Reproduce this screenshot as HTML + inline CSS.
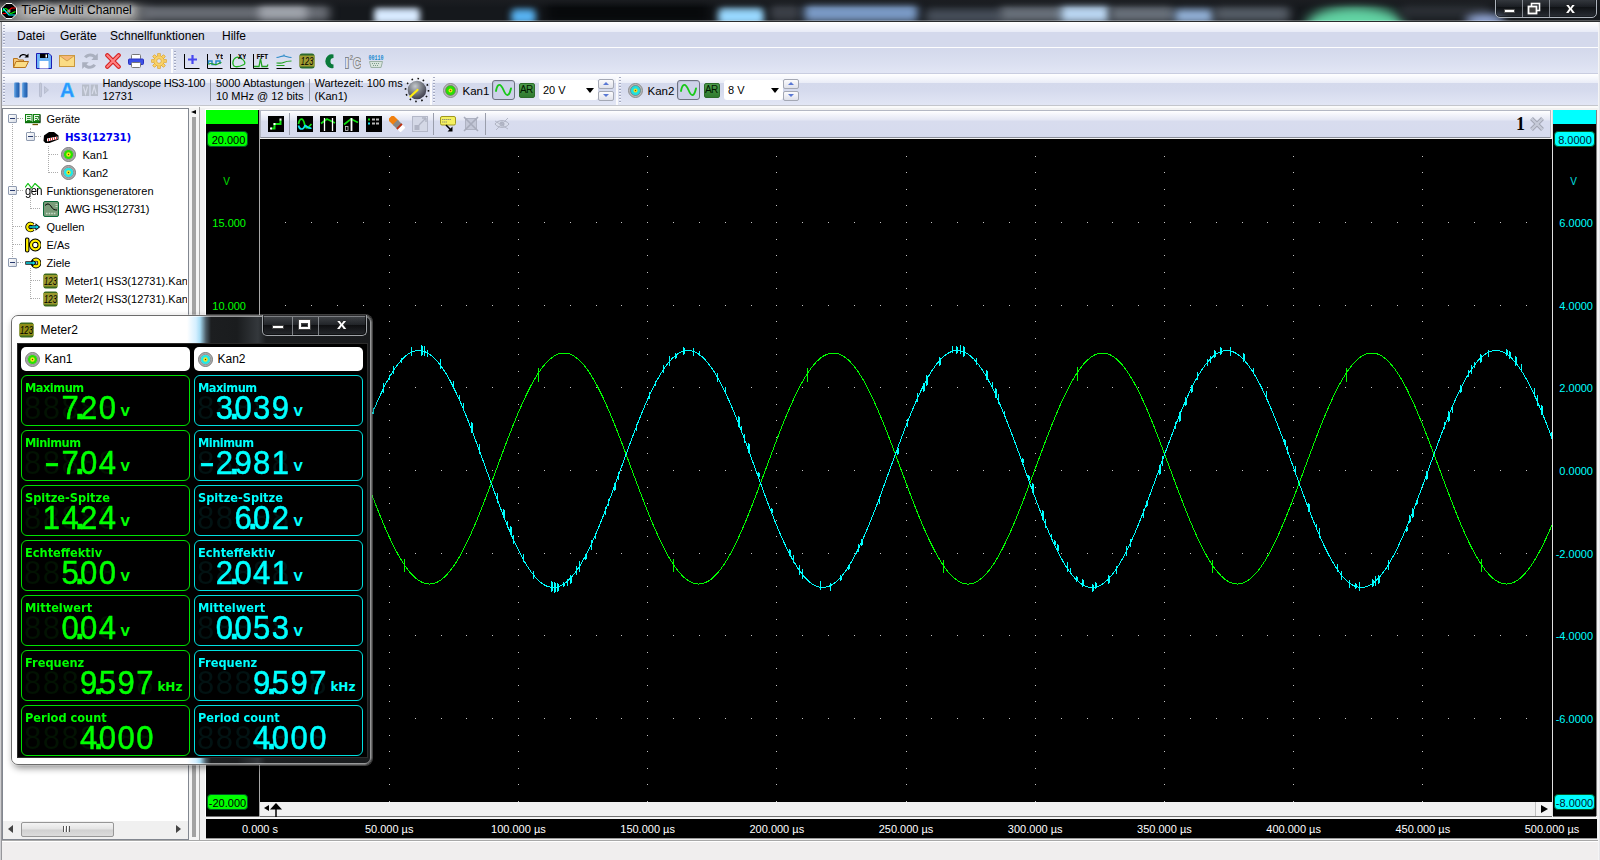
<!DOCTYPE html>
<html lang="de">
<head>
<meta charset="utf-8">
<title>TiePie Multi Channel</title>
<style>
*{box-sizing:border-box;margin:0;padding:0}
html,body{width:1600px;height:860px;overflow:hidden;background:#d6dbee;font-family:"Liberation Sans","DejaVu Sans",sans-serif;font-size:11px;color:#000}
.abs,.abs>*{position:absolute}
#root{position:relative;width:1600px;height:860px;overflow:hidden}
#root>div,#root>svg{position:absolute}
.t{position:absolute;white-space:nowrap;line-height:14px}
/* title bar */
#title{left:0;top:0;width:1600px;height:22px;background:#15181c;overflow:hidden}
#title .blob{position:absolute;border-radius:50%;filter:blur(7px)}
#titletxt{left:21.500px;top:3px;font-size:12px;line-height:15px;color:#000;text-shadow:0 0 7px rgba(255,255,255,.75),0 0 11px rgba(255,255,255,.55),0 0 14px rgba(255,255,255,.4)}
/* bars */
.bar{left:2px;width:1596px;background:linear-gradient(#fff 0,#f4f5fb 3px,#e6e9f5 9px,#d6dbee 9.5px,#d5daed 100%)}
.grip{position:absolute;width:2px;background:repeating-linear-gradient(#9096b0 0 1px,#fafbfe 1px 2px,transparent 2px 3px);opacity:.75}
.vsep{position:absolute;width:1px;background:#8b8f9e}
.ic{position:absolute;width:16px;height:16px}
.dots{border-top:1px dotted #acacac}
.vdots{border-left:1px dotted #acacac}
.box{position:absolute;width:9px;height:9px;border:1px solid #8f9bb0;background:linear-gradient(135deg,#fff,#d8dde6);border-radius:1px}
.box:after{content:"";position:absolute;left:1px;top:3px;width:5px;height:1px;background:#2a3c6e}
.lab{position:absolute;white-space:nowrap;font-size:11px;line-height:13px}
.cell{position:absolute;width:169px;height:51px;border:1px solid;border-radius:6px;background:#000}
.cell b{position:absolute;left:3px;top:5px;font-family:"DejaVu Sans","Liberation Sans",sans-serif;font-size:11.400px;line-height:14px;font-weight:bold;letter-spacing:0;transform:scaleY(1.04);transform-origin:0 100%}
.seg{position:absolute;left:3.500px;top:15.500px;height:30px;font-family:"Liberation Sans","DejaVu Sans",sans-serif;font-size:31px;line-height:30px;white-space:nowrap;transform-origin:0 0;transform:scaleY(1.09);-webkit-text-stroke:.5px currentColor}
.seg u{display:inline-block;width:18.700px;text-align:left;text-decoration:none;text-indent:-1.500px}
.seg u.m{transform:translateX(2.500px) scaleX(1.500);transform-origin:0 50%}
.seg i{font-style:normal;font-weight:bold;display:inline-block;width:0;position:relative;left:-6px}
.gh5::before{content:"88888"}.gh7::before{content:"8888888"}
.ghost{letter-spacing:1.460px;text-indent:-1.500px}
.g .ghost{color:#021202;-webkit-text-stroke:0}.c .ghost{color:#021212;-webkit-text-stroke:0}
.unit{position:absolute;font-family:"DejaVu Sans","Liberation Sans",sans-serif;font-weight:bold;font-size:12px;line-height:14px}
.g{color:#0f0;border-color:#00e000}
.c{color:#0ff;border-color:#00e0e0}
</style>
</head>
<body>
<div id="root">
<!-- ===== title bar ===== -->
<div id="title">
  <div class="blob" style="left:-30px;top:-8px;width:90px;height:40px;background:#707070;filter:blur(8px)"></div>
  <div class="blob" style="left:14px;top:0px;width:130px;height:24px;background:#a8a8a8;border-radius:10px;filter:blur(7px)"></div>
  <div class="blob" style="left:140px;top:5px;width:190px;height:16px;background:#6c7078;border-radius:6px;filter:blur(5px)"></div>
  <div class="blob" style="left:258px;top:6px;width:50px;height:13px;background:#a4a8b0;border-radius:6px;filter:blur(4px)"></div>
  <div class="blob" style="left:374px;top:8px;width:46px;height:16px;background:#d8eaff;border-radius:4px;filter:blur(3px)"></div>
  <div class="blob" style="left:511px;top:9px;width:25px;height:15px;background:#58b4f4;border-radius:5px;filter:blur(3.500px)"></div>
  <div class="blob" style="left:545px;top:0px;width:165px;height:24px;background:#07090b;border-radius:5px;filter:blur(6px)"></div>
  <div class="blob" style="left:718px;top:8px;width:46px;height:17px;background:#98d8ff;border-radius:5px;filter:blur(3.500px)"></div>
  <div class="blob" style="left:770px;top:4px;width:30px;height:17px;background:#3c4048;border-radius:5px;filter:blur(4px)"></div>
  <div class="blob" style="left:804px;top:4px;width:114px;height:18px;background:#7c9cc8;border-radius:5px;filter:blur(4px)"></div>
  <div class="blob" style="left:925px;top:9px;width:80px;height:14px;background:#4a525e;border-radius:5px;filter:blur(5px)"></div>
  <div class="blob" style="left:1000px;top:6px;width:62px;height:16px;background:#6a727c;border-radius:5px;filter:blur(4px)"></div>
  <div class="blob" style="left:1060px;top:5px;width:50px;height:18px;background:#bcd8f4;border-radius:5px;filter:blur(4px)"></div>
  <div class="blob" style="left:1110px;top:6px;width:64px;height:16px;background:#6a727c;border-radius:5px;filter:blur(4px)"></div>
  <div class="blob" style="left:1174px;top:9px;width:40px;height:14px;background:#98b8e0;border-radius:5px;filter:blur(4px)"></div>
  <div class="blob" style="left:1214px;top:7px;width:76px;height:14px;background:#5a626c;border-radius:5px;filter:blur(5px)"></div>
  <div class="blob" style="left:1306px;top:6px;width:98px;height:40px;background:#62d4a4;filter:blur(6px)"></div>
  <div class="blob" style="left:1400px;top:4px;width:90px;height:14px;background:#2c3036;border-radius:5px;filter:blur(5px)"></div>
  <div class="blob" style="left:1465px;top:15px;width:40px;height:10px;background:#a8c0f8;filter:blur(4px)"></div>
  <div style="position:absolute;left:0;top:0;width:1600px;height:8px;background:linear-gradient(rgba(28,30,34,.85),rgba(28,30,34,0))"></div>
</div>
<!-- app icon -->
<svg style="left:1px;top:3px" width="16" height="16" viewBox="0 0 16 16"><polygon points="5,0.5 11,0.5 15.5,5 15.5,11 11,15.5 5,15.5 0.5,11 0.5,5" fill="#000" stroke="#fff" stroke-width="1"/><path d="M1.5 10.5h3l6-5.500h4" stroke="#f00" fill="none" stroke-width="1.200"/><path d="M1.500 8.500c2-4 4-4 6 0s4 1 7 0" stroke="#0f0" fill="none" stroke-width="1.200"/><path d="M2 5.500l6 6.500h6" stroke="#0ff" fill="none" stroke-width="1.200"/><circle cx="8" cy="8" r="1.600" fill="#999"/></svg>
<div id="titletxt" class="t">TiePie Multi Channel</div>
<!-- window buttons -->
<div style="left:1495px;top:-4px;width:102px;height:22px;border:1px solid #aeb4bc;border-radius:0 0 5px 5px;box-shadow:inset 0 0 0 1px rgba(20,24,28,.7);background:linear-gradient(rgba(90,96,104,.55),rgba(30,34,40,.5) 50%,rgba(10,12,14,.5) 51%,rgba(60,66,76,.5))"></div>
<div style="left:1522px;top:0;width:1px;height:17px;background:#aeb4bc;opacity:.7"></div>
<div style="left:1549px;top:0;width:1px;height:17px;background:#aeb4bc;opacity:.7"></div>
<div style="left:1504px;top:9px;width:11px;height:4px;background:#fff;border:1px solid #555;border-radius:1px"></div>
<svg style="left:1527px;top:2px" width="14" height="14" viewBox="0 0 14 14"><rect x="4.500" y="1.500" width="8" height="7" fill="none" stroke="#fff" stroke-width="1.600"/><rect x="1.500" y="4.500" width="8" height="7" fill="#444" stroke="#fff" stroke-width="1.800"/></svg>
<div class="t" style="left:1566px;top:0px;font-size:14px;font-weight:bold;color:#fff;line-height:16px;text-shadow:0 0 2px #333,0 0 1px #000;transform:scaleX(1.15);transform-origin:0 0">x</div>
<div style="left:0;top:20px;width:1600px;height:1px;background:rgba(255,255,255,.28)"></div>
<div style="left:0;top:21px;width:1600px;height:1px;background:#2a2c2e"></div>
<!-- window side borders -->
<div style="left:0;top:22px;width:2px;height:838px;background:linear-gradient(90deg,#cfcfd2 0,#cfcfd2 50%,#8e8e92 50%,#a0a0a4 100%)"></div>
<div style="left:1598px;top:22px;width:2px;height:838px;background:linear-gradient(90deg,#fdfdfd,#dcdce0)"></div>
<!-- ===== band A: menu bar + toolbar 1 ===== -->
<div style="left:2px;top:22px;width:1596px;height:51px;background:linear-gradient(#fff 0,#f6f7fc 4px,#e9ecf7 9.500px,#d4d9ec 10px,#d4d9ec 28px,#dadff0 40px,#e2e6f5 51px)"></div>
<div class="grip" style="left:3px;top:25px;height:20px"></div>
<div class="t" style="left:17px;top:29px;font-size:12px">Datei</div>
<div class="t" style="left:60px;top:29px;font-size:12px">Geräte</div>
<div class="t" style="left:110px;top:29px;font-size:12px">Schnellfunktionen</div>
<div class="t" style="left:222px;top:29px;font-size:12px">Hilfe</div>
<div style="left:2px;top:47px;width:1596px;height:1.400px;background:#fdfdfe"></div>
<div class="grip" style="left:3px;top:51px;height:20px"></div>
<div style="left:171px;top:49px;width:2px;height:24px;background:#fafafc"></div>
<div class="grip" style="left:174px;top:51px;height:20px"></div>
<div style="left:2px;top:73px;width:1596px;height:1px;background:#c9cde0"></div>
<!-- ===== band B: toolbar 2 ===== -->
<div style="left:2px;top:74px;width:1596px;height:31px;background:linear-gradient(#fff 0,#f6f7fc 4px,#e9ecf7 9px,#d4d9ec 9.500px,#d5daed 16px,#e2e6f5 31px)"></div>
<div class="grip" style="left:3px;top:77px;height:26px"></div>
<div style="left:430px;top:74px;width:2px;height:31px;background:#fafafc"></div>
<div class="grip" style="left:433px;top:77px;height:26px"></div>
<div style="left:616px;top:74px;width:2px;height:31px;background:#fafafc"></div>
<div class="grip" style="left:619px;top:77px;height:26px"></div>
<div style="left:2px;top:105px;width:1596px;height:1px;background:#c4c6cc"></div>
<div style="left:2px;top:106px;width:1596px;height:2px;background:#fafafa"></div>
<!-- toolbar 1 icons -->
<svg class="ic" style="left:13px;top:53px" viewBox="0 0 16 16"><path d="M0.500 14.500V5.500h4l1 1.500h5v2" fill="#f6c878" stroke="#b8741c"/><path d="M0.500 14.500l2.500-6h12.500l-3 6z" fill="#fbdc84" stroke="#b8741c"/><path d="M6.500 4.500c1-3 5-4 7.500-1.500" fill="none" stroke="#000" stroke-width="1.300"/><path d="M15.500 0.500v4h-4z" fill="#000"/></svg>
<svg class="ic" style="left:36px;top:53px" viewBox="0 0 16 16"><path d="M0.500 0.500h12.500l2.500 2.500v12.500h-15z" fill="#6db3f5" stroke="#1c1cb4"/><rect x="4" y="0.500" width="8" height="4.500" fill="#000"/><rect x="9.500" y="1.500" width="1.500" height="3" fill="#fff"/><rect x="3.500" y="8" width="9" height="7.500" fill="#fff"/></svg>
<svg class="ic" style="left:59px;top:53px" viewBox="0 0 16 16"><rect x="0.500" y="2.500" width="15" height="11" fill="#fbdc84" stroke="#c8963c"/><path d="M0.500 2.500l7.500 5.500l7.500-5.500z" fill="#f6b878" stroke="#c8963c" stroke-width=".8"/></svg>
<svg class="ic" style="left:82px;top:53px" viewBox="0 0 16 16"><g fill="#aab0bf"><path id="ra" d="M2 3.600C5-.4 11-.4 13.500 2.500L15.800.300V7H9.300L11.500 4.800C9.500 2.800 6.500 3 4.500 5.200Z"/><use href="#ra" transform="rotate(180 8 8.100)"/></g></svg>
<svg class="ic" style="left:105px;top:53px" viewBox="0 0 16 16"><path d="M2.300 2.300l11.400 11.400M13.700 2.300l-11.400 11.400" stroke="#d41c1c" stroke-width="4.200" stroke-linecap="round"/><path d="M2.300 2.300l11.400 11.400M13.700 2.300l-11.400 11.400" stroke="#ff8282" stroke-width="2.200" stroke-linecap="round"/></svg>
<svg class="ic" style="left:128px;top:53px" viewBox="0 0 16 16"><rect x="3.500" y="1.500" width="9" height="5" rx="1" fill="#fff" stroke="#777"/><rect x="0.500" y="6" width="15" height="5.500" rx="1" fill="#3c50e6" stroke="#2a34c0"/><rect x="3.500" y="9.500" width="9" height="5" rx="1" fill="#fff" stroke="#777"/></svg>
<svg class="ic" style="left:151px;top:53px" viewBox="0 0 16 16"><g fill="#f9d36a" stroke="#d9a030" stroke-width=".7"><circle cx="8" cy="8" r="5.200"/><g id="tooth"><rect x="6.600" y="0.300" width="2.800" height="3" rx=".6"/><rect x="6.600" y="12.700" width="2.800" height="3" rx=".6"/></g><use href="#tooth" transform="rotate(45 8 8)"/><use href="#tooth" transform="rotate(90 8 8)"/><use href="#tooth" transform="rotate(135 8 8)"/></g><circle cx="8" cy="8" r="4.700" fill="#f9d36a"/><circle cx="8" cy="8" r="2.300" fill="#e4e7f3" stroke="#d9a030" stroke-width=".7"/></svg>
<!-- second group -->
<svg class="ic" style="left:184px;top:53px" viewBox="0 0 16 16"><path d="M0.500 1v14.500h15" fill="none" stroke="#000"/><path d="M8.500 2v9M4 6.500h9" stroke="#4848f0" stroke-width="2.200"/></svg>
<svg class="ic" style="left:207px;top:53px" viewBox="0 0 16 16"><path d="M0.500 1v14.500h15" fill="none" stroke="#000"/><path d="M1.500 11v-3h3.500v3.500h4v-3.500h4v3" fill="none" stroke="#2a8ac8" stroke-width="1.500"/><path d="M1.500 11.500c3-3 5 1 8 0s3-2 5-2" fill="none" stroke="#20a020" stroke-width="1.200"/><text x="8.500" y="6" font-size="7" font-weight="bold" font-family="Liberation Mono,monospace" fill="#000">Yt</text></svg>
<svg class="ic" style="left:230px;top:53px" viewBox="0 0 16 16"><path d="M0.500 1v14.500h15" fill="none" stroke="#000"/><path d="M6 4.500c-4 2-4 8-1 9s7-1 9-2s0-5-3-6s-3-2-5-1z" fill="none" stroke="#20b020" stroke-width="1.300"/><text x="8" y="6" font-size="7" font-weight="bold" font-family="Liberation Mono,monospace" fill="#000">XY</text></svg>
<svg class="ic" style="left:253px;top:53px" viewBox="0 0 16 16"><path d="M0.500 1v14.500h15" fill="none" stroke="#000"/><path d="M1 13.500h5l1.500-8l1.500 8h5l1-2" fill="none" stroke="#20a020" stroke-width="1.300"/><text x="3.500" y="6" font-size="7" font-weight="bold" font-family="Liberation Mono,monospace" fill="#000" letter-spacing="-.5">FFT</text></svg>
<svg class="ic" style="left:276px;top:53px" viewBox="0 0 16 16"><path d="M0.500 4.500c4-.5 6-2 8-1.500s4 1.500 7 1.500M8 1.500v2" fill="none" stroke="#2a8ac8" stroke-width="1.200"/><path d="M0.500 10c4 0 5 .5 7-.5s5-1.500 8-1.500M0.500 12.500h8" fill="none" stroke="#20a020" stroke-width="1.200"/><path d="M0.500 15.500h15" stroke="#000"/></svg>
<svg class="ic" style="left:299px;top:53px" viewBox="0 0 16 16"><rect x="0.500" y="0.500" width="15" height="15" rx="2.500" fill="#2c6a2c"/><rect x="0.500" y="2.500" width="15" height="11" fill="#a09c30"/><text x="1.800" y="12" font-size="10" font-style="italic" font-family="Liberation Sans,sans-serif" fill="#000" textLength="12.500" lengthAdjust="spacingAndGlyphs">123</text></svg>
<svg class="ic" style="left:322px;top:53px" viewBox="0 0 16 16"><path d="M11.500 1.500a6.500 7 0 1 0 0 13.500v-3.500a3 3.200 0 1 1 0-6.500z" fill="#0a7a3a"/></svg>
<svg class="ic" style="left:345px;top:53px" viewBox="0 0 16 16"><g font-family="Liberation Sans,sans-serif" font-weight="bold" fill="#dfe2ee" stroke="#868686" stroke-width="2" paint-order="stroke"><text x="-0.300" y="15.300" font-size="14.500" textLength="4" lengthAdjust="spacingAndGlyphs">I</text><text x="8.200" y="15.300" font-size="14.500" textLength="7.800" lengthAdjust="spacingAndGlyphs">C</text></g><text x="4.400" y="7" font-size="6.500" font-weight="bold" font-family="Liberation Sans,sans-serif" fill="#8c8c8c">2</text></svg>
<svg class="ic" style="left:368px;top:53px" viewBox="0 0 16 16"><text x="0.500" y="6.500" font-size="7" font-weight="bold" font-family="Liberation Mono,monospace" fill="#1a8ad0" textLength="15" lengthAdjust="spacingAndGlyphs">00110</text><path d="M1.500 8.500h13l-1.500 6h-10z" fill="#d8e4dc" stroke="#9ab0a4" stroke-linejoin="round"/><path d="M4 10.500h8M5 12.500h6" stroke="#7a9a8a" stroke-dasharray="1 1"/></svg>
<!-- toolbar 2 -->
<svg class="ic" style="left:13px;top:82px" viewBox="0 0 16 16"><defs><linearGradient id="pg" x1="0" x2="1"><stop offset="0" stop-color="#7ab4ea"/><stop offset=".4" stop-color="#3a7cc8"/><stop offset="1" stop-color="#1e5aa8"/></linearGradient></defs><rect x="1" y="0.500" width="5.500" height="15" rx="1" fill="url(#pg)"/><rect x="9" y="0.500" width="5.500" height="15" rx="1" fill="url(#pg)"/></svg>
<svg class="ic" style="left:36px;top:82px" viewBox="0 0 16 16"><rect x="3.500" y="1" width="2" height="14" rx="1" fill="#c3c8d8" stroke="#aab0c4" stroke-width=".6"/><path d="M8.500 4.500l4 3.500l-4 3.500z" fill="#c3c8d8" stroke="#aab0c4" stroke-width=".6"/></svg>
<div class="t" style="left:60px;top:78.500px;font-size:20px;line-height:22px;font-weight:bold;color:#2a92ff;-webkit-text-stroke:.5px #38c4ff;transform:scaleX(1);transform-origin:0 0">A</div>
<svg class="ic" style="left:82px;top:82px" viewBox="0 0 16 16"><rect x="0" y="2.500" width="7.300" height="11.500" fill="#b7bdc9"/><rect x="8.700" y="2.500" width="7.300" height="11.500" fill="#b7bdc9"/><path d="M1.500 4.500l2 7.500l2-7.500M10.200 12l2-7.500l2 7.500" fill="none" stroke="#d8dcea" stroke-width="1.200"/></svg>
<div class="t" style="left:102.5px;top:75.5px;letter-spacing:-.28px">Handyscope HS3-100</div>
<div class="t" style="left:102.5px;top:88.5px;">12731</div>
<div class="vsep" style="left:210px;top:79px;height:22px"></div>
<div class="t" style="left:216px;top:75.5px;">5000 Abtastungen</div>
<div class="t" style="left:216px;top:88.5px;">10 MHz @ 12 bits</div>
<div class="vsep" style="left:309px;top:79px;height:22px"></div>
<div class="t" style="left:314.5px;top:75.5px;">Wartezeit: 100 ms</div>
<div class="t" style="left:314.5px;top:88.5px;">(Kan1)</div>
<svg style="left:404px;top:77px;position:absolute" width="26" height="26" viewBox="0 0 26 26"><defs><radialGradient id="kg" cx=".4" cy=".3" r=".8"><stop offset="0" stop-color="#c4c8cc"/><stop offset=".45" stop-color="#7c8088"/><stop offset="1" stop-color="#2c2c3c"/></radialGradient></defs><circle cx="13" cy="13" r="11.500" fill="none" stroke="#111" stroke-width="1.600" stroke-dasharray="1.600 4.420" transform="rotate(-60 13 13)"/><circle cx="13" cy="13" r="9.300" fill="url(#kg)"/><path d="M6.500 19.500l7-6.500" stroke="#ffee10" stroke-width="2.200" stroke-linecap="round"/></svg>
<svg style="left:443px;top:83px;position:absolute" width="15" height="15" viewBox="0 0 15 15"><circle cx="7.500" cy="7.500" r="7" fill="#b8b8b8" stroke="#8c8c8c"/><circle cx="7.500" cy="7.500" r="5" fill="#28e000" stroke="#6a6a6a" stroke-width=".6"/><circle cx="7.500" cy="7.500" r="2" fill="#f0e020"/><circle cx="7.500" cy="7.500" r=".7" fill="#806000"/></svg>
<div class="t" style="left:462.5px;top:83.500px;font-size:11.500px">Kan1</div>
<div style="left:492px;top:80px;width:23px;height:20px;border:1px solid #6e7280;border-radius:3px;background:#cdd2e8;box-shadow:inset 1px 1px 0 #bcc2da"></div>
<svg style="left:495px;top:83px;position:absolute" width="17" height="14" viewBox="0 0 17 14"><path d="M1 8c1.500-8 4.500-8 7.500-1s5.500 7 7.500-1.500" fill="none" stroke="#18c818" stroke-width="1.900" stroke-linecap="round"/></svg>
<div style="left:519px;top:82.500px;width:16px;height:15px;background:linear-gradient(#4c9a4c,#2f7a2f);border:1px solid #2c6c2c;border-radius:2px"></div>
<div class="t" style="left:520px;top:84px;font-size:10px;line-height:12px;letter-spacing:-.6px;color:#001800">AR</div>
<div style="left:538.5px;top:79.500px;width:59px;height:20px;background:#fff;border-radius:3px"></div>
<div class="t" style="left:543px;top:83px">20 V</div>
<div style="left:586px;top:88px;width:0;height:0;border:4px solid transparent;border-top:5px solid #000;border-bottom:0"></div>
<div style="left:598px;top:79px;width:16px;height:10px;border:1px solid #a4a8b4;border-radius:2px;background:linear-gradient(#fbfbfd,#dfe1ea)"></div>
<div style="left:603px;top:82px;width:0;height:0;border:3px solid transparent;border-bottom:3.500px solid #5a78d4;border-top:0"></div>
<div style="left:598px;top:90.5px;width:16px;height:10px;border:1px solid #a4a8b4;border-radius:2px;background:linear-gradient(#fbfbfd,#dfe1ea)"></div>
<div style="left:603px;top:94.0px;width:0;height:0;border:3px solid transparent;border-top:3.500px solid #5a78d4;border-bottom:0"></div>
<svg style="left:628px;top:83px;position:absolute" width="15" height="15" viewBox="0 0 15 15"><circle cx="7.500" cy="7.500" r="7" fill="#b8b8b8" stroke="#8c8c8c"/><circle cx="7.500" cy="7.500" r="5" fill="#20e0e0" stroke="#6a6a6a" stroke-width=".6"/><circle cx="7.500" cy="7.500" r="2" fill="#f0e020"/><circle cx="7.500" cy="7.500" r=".7" fill="#806000"/></svg>
<div class="t" style="left:647.5px;top:83.500px;font-size:11.500px">Kan2</div>
<div style="left:677px;top:80px;width:23px;height:20px;border:1px solid #6e7280;border-radius:3px;background:#cdd2e8;box-shadow:inset 1px 1px 0 #bcc2da"></div>
<svg style="left:680px;top:83px;position:absolute" width="17" height="14" viewBox="0 0 17 14"><path d="M1 8c1.500-8 4.500-8 7.500-1s5.500 7 7.500-1.500" fill="none" stroke="#18c818" stroke-width="1.900" stroke-linecap="round"/></svg>
<div style="left:704px;top:82.500px;width:16px;height:15px;background:linear-gradient(#4c9a4c,#2f7a2f);border:1px solid #2c6c2c;border-radius:2px"></div>
<div class="t" style="left:705px;top:84px;font-size:10px;line-height:12px;letter-spacing:-.6px;color:#001800">AR</div>
<div style="left:723.5px;top:79.500px;width:59px;height:20px;background:#fff;border-radius:3px"></div>
<div class="t" style="left:728px;top:83px">8 V</div>
<div style="left:771px;top:88px;width:0;height:0;border:4px solid transparent;border-top:5px solid #000;border-bottom:0"></div>
<div style="left:783px;top:79px;width:16px;height:10px;border:1px solid #a4a8b4;border-radius:2px;background:linear-gradient(#fbfbfd,#dfe1ea)"></div>
<div style="left:788px;top:82px;width:0;height:0;border:3px solid transparent;border-bottom:3.500px solid #5a78d4;border-top:0"></div>
<div style="left:783px;top:90.5px;width:16px;height:10px;border:1px solid #a4a8b4;border-radius:2px;background:linear-gradient(#fbfbfd,#dfe1ea)"></div>
<div style="left:788px;top:94.0px;width:0;height:0;border:3px solid transparent;border-top:3.500px solid #5a78d4;border-bottom:0"></div>
<!-- ===== left tree panel ===== -->
<div style="left:2px;top:108px;width:1596px;height:734px;background:#f1f1f1"></div>
<div style="left:2px;top:108px;width:187px;height:732px;background:#fff;border:1px solid #828790"></div>
<div class="vdots" style="left:12px;top:124px;width:0;height:139px"></div>
<div class="dots" style="left:17px;top:118px;width:6px;height:0"></div>
<div class="dots" style="left:17px;top:190px;width:6px;height:0"></div>
<div class="dots" style="left:13px;top:226px;width:9px;height:0"></div>
<div class="dots" style="left:13px;top:244px;width:9px;height:0"></div>
<div class="dots" style="left:17px;top:262px;width:6px;height:0"></div>
<div class="vdots" style="left:30px;top:128px;width:0;height:4px"></div>
<div class="dots" style="left:35px;top:136px;width:6px;height:0"></div>
<div class="vdots" style="left:48px;top:146px;width:0;height:27px"></div>
<div class="dots" style="left:49px;top:154px;width:9px;height:0"></div>
<div class="dots" style="left:49px;top:172px;width:9px;height:0"></div>
<div class="vdots" style="left:30px;top:196px;width:0;height:13px"></div>
<div class="dots" style="left:31px;top:208px;width:9px;height:0"></div>
<div class="vdots" style="left:30px;top:268px;width:0;height:31px"></div>
<div class="dots" style="left:31px;top:280px;width:9px;height:0"></div>
<div class="dots" style="left:31px;top:298px;width:9px;height:0"></div>
<div class="box" style="left:8px;top:114px"></div>
<div class="box" style="left:26px;top:132px"></div>
<div class="box" style="left:8px;top:186px"></div>
<div class="box" style="left:8px;top:258px"></div>
<div class="t" style="left:46.5px;top:111.5px;font-size:11px;">Geräte</div>
<div class="t" style="left:65px;top:129.5px;font-size:11px;font-weight:bold;color:#0000f0;font-family:'DejaVu Sans','Liberation Sans',sans-serif;font-size:10.300px;letter-spacing:-.25px;">HS3(12731)</div>
<div class="t" style="left:82.5px;top:147.5px;font-size:11px;">Kan1</div>
<div class="t" style="left:82.5px;top:165.5px;font-size:11px;">Kan2</div>
<div class="t" style="left:46.5px;top:183.5px;font-size:11px;">Funktionsgeneratoren</div>
<div class="t" style="left:65px;top:201.5px;font-size:11px;letter-spacing:-.3px;">AWG HS3(12731)</div>
<div class="t" style="left:46.5px;top:219.5px;font-size:11px;">Quellen</div>
<div class="t" style="left:46.5px;top:237.5px;font-size:11px;">E/As</div>
<div class="t" style="left:46.5px;top:255.5px;font-size:11px;">Ziele</div>
<div class="t" style="left:65px;top:273.5px;font-size:11px;width:122px;overflow:hidden">Meter1( HS3(12731).Kan1)</div>
<div class="t" style="left:65px;top:291.5px;font-size:11px;width:122px;overflow:hidden">Meter2( HS3(12731).Kan2)</div>
<svg style="position:absolute;left:25px;top:110.5px" width="16" height="16" viewBox="0 0 16 16"><rect x="0.500" y="3.500" width="6.500" height="7" fill="#e8f4e8" stroke="#108010"/><path d="M2 5.500h3.500M2 7.500h3.500M2 9.500h3.500" stroke="#108010" stroke-width=".9"/><rect x="8.500" y="3.500" width="6.500" height="7" fill="#e8f4e8" stroke="#108010"/><path d="M10 5.500h4M10 7.500h2M12 9.500l2-3.500M10 9.500h4" stroke="#108010" stroke-width=".9"/><path d="M0 11.500h15.500" stroke="#0a6a0a" stroke-width="1.400"/><path d="M7.500 13.500h5.500" stroke="#705000" stroke-width="1.300"/><path d="M15 4v7.500" stroke="#222" stroke-width="1"/></svg>
<svg style="position:absolute;left:43px;top:128.5px" width="16" height="16" viewBox="0 0 16 16"><path d="M1 6.500l5-3.500h5l4.500 3.500v4l-9 3.500h-4l-2-2z" fill="#000"/><path d="M4 9.500l10.500-2v2.500l-10.500 2.500z" fill="#fff"/><path d="M5.500 9.500v2.500M7.500 9v2.500M9.500 8.700v2.500M11.500 8.300v2.500M13.500 8v2.500" stroke="#d02020" stroke-width=".9"/></svg>
<svg style="position:absolute;left:61px;top:147.0px" width="15" height="15" viewBox="0 0 15 15"><circle cx="7.500" cy="7.500" r="7" fill="#b4b4b4" stroke="#7a7a7a"/><circle cx="7.500" cy="7.500" r="5.300" fill="none" stroke="#8a8a8a" stroke-width=".8"/><circle cx="7.500" cy="7.500" r="4.600" fill="#28e000"/><circle cx="7.500" cy="7.500" r="2.200" fill="#f4e420"/><circle cx="7.500" cy="7.500" r=".7" fill="#604000"/></svg>
<svg style="position:absolute;left:61px;top:165.0px" width="15" height="15" viewBox="0 0 15 15"><circle cx="7.500" cy="7.500" r="7" fill="#b4b4b4" stroke="#7a7a7a"/><circle cx="7.500" cy="7.500" r="5.300" fill="none" stroke="#8a8a8a" stroke-width=".8"/><circle cx="7.500" cy="7.500" r="4.600" fill="#20e8e8"/><circle cx="7.500" cy="7.500" r="2.200" fill="#f4e420"/><circle cx="7.500" cy="7.500" r=".7" fill="#604000"/></svg>
<div class="t" style="left:24.500px;top:183.5px;font-size:12.500px;line-height:14px;letter-spacing:-.7px;transform:scaleX(.9);transform-origin:0 0">gen</div>
<svg style="position:absolute;left:25px;top:182.5px" width="16" height="6" viewBox="0 0 16 6"><path d="M0 4.500l3-4l3.500 4.500l3.500-4.500l5.500 5" fill="none" stroke="#10c010" stroke-width="1.200"/></svg>
<svg style="position:absolute;left:43px;top:200.5px" width="16" height="16" viewBox="0 0 16 16"><rect x="0.500" y="0.500" width="15" height="15" rx="1.500" fill="#7a9c7a" stroke="#0a6a3a"/><path d="M2 4.500c3-3 5-1 6.500 1.500s3 3 5.500 3" fill="none" stroke="#000" stroke-width="1"/><path d="M12.500 3.500h2M12.500 5.500h2" stroke="#d0e0d0" stroke-width=".8"/><path d="M3 12.500h10" stroke="#c8dcc8" stroke-width="1.400" stroke-dasharray="1.600 1"/></svg>
<svg style="position:absolute;left:25px;top:218.5px" width="16" height="16" viewBox="0 0 16 16"><path d="M8 5.800a3.300 3.300 0 1 0 0 4.400" fill="none" stroke="#000" stroke-width="4"/><path d="M8 5.800a3.300 3.300 0 1 0 0 4.400" fill="none" stroke="#fff000" stroke-width="2.200"/><path d="M4.500 8h7" stroke="#000" stroke-width="3.400"/><path d="M10.500 4.300l4.800 3.700l-4.800 3.700z" fill="#000"/><path d="M5 8h7" stroke="#10e0f0" stroke-width="1.500"/><path d="M11.300 6l2.600 2l-2.600 2z" fill="#10e0f0"/></svg>
<svg style="position:absolute;left:25px;top:236.5px" width="16" height="16" viewBox="0 0 16 16"><rect x="0.500" y="1" width="3.400" height="14" rx="1.500" fill="#fff000" stroke="#000" stroke-width="1.100"/><circle cx="10.300" cy="8" r="4.300" fill="none" stroke="#000" stroke-width="4.200"/><circle cx="10.300" cy="8" r="4.300" fill="none" stroke="#fff000" stroke-width="2.200"/></svg>
<svg style="position:absolute;left:25px;top:254.5px" width="16" height="16" viewBox="0 0 16 16"><circle cx="11" cy="8" r="3.400" fill="none" stroke="#000" stroke-width="4"/><circle cx="11" cy="8" r="3.400" fill="none" stroke="#fff000" stroke-width="2.200"/><path d="M0.300 8h8" stroke="#000" stroke-width="3.400"/><path d="M7 4.300l4.800 3.700l-4.800 3.700z" fill="#000"/><path d="M1 8h8" stroke="#10e0f0" stroke-width="1.500"/><path d="M7.800 6l2.600 2l-2.600 2z" fill="#10e0f0"/></svg>
<svg style="position:absolute;left:43px;top:272.5px" width="15" height="16" viewBox="0 0 15 16"><rect x="0.500" y="0.500" width="14" height="15" rx="2" fill="#3c6a1c"/><rect x="0.500" y="2" width="14" height="11.500" fill="#9a982c"/><text x="1" y="12" font-size="10.500" font-style="italic" font-family="Liberation Sans,sans-serif" fill="#000" textLength="13" lengthAdjust="spacingAndGlyphs">123</text></svg>
<svg style="position:absolute;left:43px;top:290.5px" width="15" height="16" viewBox="0 0 15 16"><rect x="0.500" y="0.500" width="14" height="15" rx="2" fill="#3c6a1c"/><rect x="0.500" y="2" width="14" height="11.500" fill="#9a982c"/><text x="1" y="12" font-size="10.500" font-style="italic" font-family="Liberation Sans,sans-serif" fill="#000" textLength="13" lengthAdjust="spacingAndGlyphs">123</text></svg>
<div style="left:3px;top:821px;width:185px;height:18px;background:#f0f0f0"></div>
<div style="left:21px;top:822px;width:93px;height:15px;border:1px solid #979797;border-radius:2px;background:linear-gradient(#f4f4f4,#e4e4e4 48%,#d0d0d0 52%,#dcdcdc)"></div>
<div style="left:63px;top:826px;width:7px;height:6px;background:repeating-linear-gradient(90deg,#555 0 1px,#fff 1px 2px,transparent 2px 3px)"></div>
<div style="left:8px;top:825px;width:0;height:0;border:4px solid transparent;border-right:5px solid #444;border-left:0"></div>
<div style="left:176px;top:825px;width:0;height:0;border:4px solid transparent;border-left:5px solid #444;border-right:0"></div>
<div style="left:189px;top:108px;width:10px;height:734px;background:#f4f4f4"></div>
<div style="left:192px;top:117px;width:4px;height:720px;background:#a2a2a2"></div>
<div style="left:199px;top:107px;width:1px;height:733px;background:#a6a6a6"></div>
<div style="left:205px;top:109px;width:54px;height:1px;background:#fff"></div>
<div style="left:205px;top:109px;width:1px;height:708px;background:#fff"></div>
<div style="left:191px;top:110px;width:0;height:0;border:2.500px solid transparent;border-right:5px solid #000;border-left:0"></div>
<div style="left:2px;top:840px;width:1596px;height:1px;background:#a8a8a8"></div>
<div style="left:2px;top:841px;width:1596px;height:1px;background:#fff"></div>
<div style="left:2px;top:842px;width:1596px;height:18px;background:#f0eeee"></div>
<!-- ===== scope ===== -->
<div style="left:206px;top:110px;width:53px;height:707px;background:#000;border-bottom:1px solid #707070"></div>
<div style="left:206px;top:110px;width:52px;height:14px;background:#00ff00"></div>
<div style="left:259px;top:110px;width:1px;height:707px;background:#a8a8a8"></div>
<div style="left:1553px;top:110px;width:43px;height:707px;background:#000;border-bottom:1px solid #707070"></div>
<div style="left:1553px;top:110px;width:43px;height:14px;background:#00ffff"></div>
<div style="left:1552px;top:110px;width:1px;height:706px;background:#e0e0e0"></div>
<div style="left:1596px;top:110px;width:1px;height:706px;background:#808080"></div>
<div style="left:260px;top:139px;width:1292px;height:664px;background:#000"></div>
<div style="left:260px;top:110px;width:1291px;height:28px;background:linear-gradient(#fff 0,#f2f3fa 4px,#e4e7f4 9px,#d8dcee 10px,#d6dbee 100%);border:1px solid #b4b8c4;border-bottom-color:#8a8e98"></div>
<div style="left:206px;top:819px;width:1391px;height:19px;background:#000"></div>
<div style="left:206px;top:838px;width:1391px;height:1px;background:#9a9a9a"></div>
<div style="left:260px;top:802px;width:1292px;height:15px;background:#f0f0f0;border-bottom:1px solid #707070"></div>
<div style="left:1535px;top:802px;width:16px;height:14px;background:#f4f4f4;border-left:1px solid #c0c0c0"></div>
<div style="left:1541px;top:805px;width:0;height:0;border:4px solid transparent;border-left:7px solid #000;border-right:0"></div>
<div style="left:264px;top:805px;width:0;height:0;border:3px solid transparent;border-right:5px solid #000;border-left:0"></div>
<svg style="left:269px;top:802px;position:absolute" width="14" height="15" viewBox="0 0 14 15"><path d="M7 1l6 6.500h-12z" fill="#000"/><path d="M7 6v9" stroke="#000" stroke-width="1.500"/></svg>
<div style="left:206px;top:817px;width:1391px;height:2px;background:#f4f4f4"></div>
<div style="left:207px;top:131px;width:41px;height:16px;background:#00ff00;border-radius:4px;border:1px solid #052"></div>
<div class="lab" style="left:228.5px;top:139.5px;color:#000;transform:translate(-50%,-50%);">20.000</div>
<div style="left:207px;top:794px;width:41px;height:16px;background:#00ff00;border-radius:4px;border:1px solid #052"></div>
<div class="lab" style="left:227.5px;top:802.5px;color:#000;transform:translate(-50%,-50%);">-20.000</div>
<div style="left:1554px;top:131px;width:41px;height:16px;background:#00ffff;border-radius:4px;border:1px solid #052"></div>
<div class="lab" style="left:1575px;top:139.5px;color:#001830;transform:translate(-50%,-50%);">8.0000</div>
<div style="left:1554px;top:794px;width:41px;height:16px;background:#00ffff;border-radius:4px;border:1px solid #052"></div>
<div class="lab" style="left:1574.5px;top:802.5px;color:#001830;transform:translate(-50%,-50%);">-8.0000</div>
<div class="lab" style="left:226.5px;top:181px;color:#00e000;transform:translate(-50%,-50%);font-size:10px">V</div>
<div class="lab" style="left:1573.5px;top:181px;color:#00e0e0;transform:translate(-50%,-50%);font-size:10px">V</div>
<div class="lab" style="left:246px;top:223.0px;color:#00ff00;transform:translate(-100%,-50%);">15.000</div>
<div class="lab" style="left:246px;top:305.66700000000003px;color:#00ff00;transform:translate(-100%,-50%);">10.000</div>
<div class="lab" style="left:246px;top:388.334px;color:#00ff00;transform:translate(-100%,-50%);">5.000</div>
<div class="lab" style="left:246px;top:471.001px;color:#00ff00;transform:translate(-100%,-50%);">0.000</div>
<div class="lab" style="left:246px;top:553.668px;color:#00ff00;transform:translate(-100%,-50%);">-5.000</div>
<div class="lab" style="left:246px;top:636.335px;color:#00ff00;transform:translate(-100%,-50%);">-10.000</div>
<div class="lab" style="left:246px;top:719.002px;color:#00ff00;transform:translate(-100%,-50%);">-15.000</div>
<div class="lab" style="left:1593px;top:223.0px;color:#00ffff;transform:translate(-100%,-50%);">6.0000</div>
<div class="lab" style="left:1593px;top:305.66700000000003px;color:#00ffff;transform:translate(-100%,-50%);">4.0000</div>
<div class="lab" style="left:1593px;top:388.334px;color:#00ffff;transform:translate(-100%,-50%);">2.0000</div>
<div class="lab" style="left:1593px;top:471.001px;color:#00ffff;transform:translate(-100%,-50%);">0.0000</div>
<div class="lab" style="left:1593px;top:553.668px;color:#00ffff;transform:translate(-100%,-50%);">-2.0000</div>
<div class="lab" style="left:1593px;top:636.335px;color:#00ffff;transform:translate(-100%,-50%);">-4.0000</div>
<div class="lab" style="left:1593px;top:719.002px;color:#00ffff;transform:translate(-100%,-50%);">-6.0000</div>
<div class="lab" style="left:260.0px;top:829px;color:#fff;transform:translate(-50%,-50%);">0.000 s</div>
<div class="lab" style="left:389.2px;top:829px;color:#fff;transform:translate(-50%,-50%);">50.000 µs</div>
<div class="lab" style="left:518.4px;top:829px;color:#fff;transform:translate(-50%,-50%);">100.000 µs</div>
<div class="lab" style="left:647.5999999999999px;top:829px;color:#fff;transform:translate(-50%,-50%);">150.000 µs</div>
<div class="lab" style="left:776.8px;top:829px;color:#fff;transform:translate(-50%,-50%);">200.000 µs</div>
<div class="lab" style="left:906.0px;top:829px;color:#fff;transform:translate(-50%,-50%);">250.000 µs</div>
<div class="lab" style="left:1035.1999999999998px;top:829px;color:#fff;transform:translate(-50%,-50%);">300.000 µs</div>
<div class="lab" style="left:1164.3999999999999px;top:829px;color:#fff;transform:translate(-50%,-50%);">350.000 µs</div>
<div class="lab" style="left:1293.6px;top:829px;color:#fff;transform:translate(-50%,-50%);">400.000 µs</div>
<div class="lab" style="left:1422.8px;top:829px;color:#fff;transform:translate(-50%,-50%);">450.000 µs</div>
<div class="lab" style="left:1552.0px;top:829px;color:#fff;transform:translate(-50%,-50%);">500.000 µs</div>
<svg style="left:260px;top:139px;position:absolute" width="1292" height="664" viewBox="0 0 1292 664">
<path d="M129 17.5h1M129 33.5h1M129 50.5h1M129 66.5h1M129 83.5h1M129 100.5h1M129 116.5h1M129 133.5h1M129 149.5h1M129 166.5h1M129 182.5h1M129 199.5h1M129 215.5h1M129 232.5h1M129 248.5h1M129 265.5h1M129 281.5h1M129 298.5h1M129 314.5h1M129 331.5h1M129 348.5h1M129 364.5h1M129 381.5h1M129 397.5h1M129 414.5h1M129 430.5h1M129 447.5h1M129 463.5h1M129 480.5h1M129 496.5h1M129 513.5h1M129 529.5h1M129 546.5h1M129 562.5h1M129 579.5h1M129 596.5h1M129 612.5h1M129 629.5h1M129 645.5h1M129 662.5h1M258 17.5h1M258 33.5h1M258 50.5h1M258 66.5h1M258 83.5h1M258 100.5h1M258 116.5h1M258 133.5h1M258 149.5h1M258 166.5h1M258 182.5h1M258 199.5h1M258 215.5h1M258 232.5h1M258 248.5h1M258 265.5h1M258 281.5h1M258 298.5h1M258 314.5h1M258 331.5h1M258 348.5h1M258 364.5h1M258 381.5h1M258 397.5h1M258 414.5h1M258 430.5h1M258 447.5h1M258 463.5h1M258 480.5h1M258 496.5h1M258 513.5h1M258 529.5h1M258 546.5h1M258 562.5h1M258 579.5h1M258 596.5h1M258 612.5h1M258 629.5h1M258 645.5h1M258 662.5h1M387 17.5h1M387 33.5h1M387 50.5h1M387 66.5h1M387 83.5h1M387 100.5h1M387 116.5h1M387 133.5h1M387 149.5h1M387 166.5h1M387 182.5h1M387 199.5h1M387 215.5h1M387 232.5h1M387 248.5h1M387 265.5h1M387 281.5h1M387 298.5h1M387 314.5h1M387 331.5h1M387 348.5h1M387 364.5h1M387 381.5h1M387 397.5h1M387 414.5h1M387 430.5h1M387 447.5h1M387 463.5h1M387 480.5h1M387 496.5h1M387 513.5h1M387 529.5h1M387 546.5h1M387 562.5h1M387 579.5h1M387 596.5h1M387 612.5h1M387 629.5h1M387 645.5h1M387 662.5h1M516 17.5h1M516 33.5h1M516 50.5h1M516 66.5h1M516 83.5h1M516 100.5h1M516 116.5h1M516 133.5h1M516 149.5h1M516 166.5h1M516 182.5h1M516 199.5h1M516 215.5h1M516 232.5h1M516 248.5h1M516 265.5h1M516 281.5h1M516 298.5h1M516 314.5h1M516 331.5h1M516 348.5h1M516 364.5h1M516 381.5h1M516 397.5h1M516 414.5h1M516 430.5h1M516 447.5h1M516 463.5h1M516 480.5h1M516 496.5h1M516 513.5h1M516 529.5h1M516 546.5h1M516 562.5h1M516 579.5h1M516 596.5h1M516 612.5h1M516 629.5h1M516 645.5h1M516 662.5h1M646 17.5h1M646 33.5h1M646 50.5h1M646 66.5h1M646 83.5h1M646 100.5h1M646 116.5h1M646 133.5h1M646 149.5h1M646 166.5h1M646 182.5h1M646 199.5h1M646 215.5h1M646 232.5h1M646 248.5h1M646 265.5h1M646 281.5h1M646 298.5h1M646 314.5h1M646 331.5h1M646 348.5h1M646 364.5h1M646 381.5h1M646 397.5h1M646 414.5h1M646 430.5h1M646 447.5h1M646 463.5h1M646 480.5h1M646 496.5h1M646 513.5h1M646 529.5h1M646 546.5h1M646 562.5h1M646 579.5h1M646 596.5h1M646 612.5h1M646 629.5h1M646 645.5h1M646 662.5h1M775 17.5h1M775 33.5h1M775 50.5h1M775 66.5h1M775 83.5h1M775 100.5h1M775 116.5h1M775 133.5h1M775 149.5h1M775 166.5h1M775 182.5h1M775 199.5h1M775 215.5h1M775 232.5h1M775 248.5h1M775 265.5h1M775 281.5h1M775 298.5h1M775 314.5h1M775 331.5h1M775 348.5h1M775 364.5h1M775 381.5h1M775 397.5h1M775 414.5h1M775 430.5h1M775 447.5h1M775 463.5h1M775 480.5h1M775 496.5h1M775 513.5h1M775 529.5h1M775 546.5h1M775 562.5h1M775 579.5h1M775 596.5h1M775 612.5h1M775 629.5h1M775 645.5h1M775 662.5h1M904 17.5h1M904 33.5h1M904 50.5h1M904 66.5h1M904 83.5h1M904 100.5h1M904 116.5h1M904 133.5h1M904 149.5h1M904 166.5h1M904 182.5h1M904 199.5h1M904 215.5h1M904 232.5h1M904 248.5h1M904 265.5h1M904 281.5h1M904 298.5h1M904 314.5h1M904 331.5h1M904 348.5h1M904 364.5h1M904 381.5h1M904 397.5h1M904 414.5h1M904 430.5h1M904 447.5h1M904 463.5h1M904 480.5h1M904 496.5h1M904 513.5h1M904 529.5h1M904 546.5h1M904 562.5h1M904 579.5h1M904 596.5h1M904 612.5h1M904 629.5h1M904 645.5h1M904 662.5h1M1033 17.5h1M1033 33.5h1M1033 50.5h1M1033 66.5h1M1033 83.5h1M1033 100.5h1M1033 116.5h1M1033 133.5h1M1033 149.5h1M1033 166.5h1M1033 182.5h1M1033 199.5h1M1033 215.5h1M1033 232.5h1M1033 248.5h1M1033 265.5h1M1033 281.5h1M1033 298.5h1M1033 314.5h1M1033 331.5h1M1033 348.5h1M1033 364.5h1M1033 381.5h1M1033 397.5h1M1033 414.5h1M1033 430.5h1M1033 447.5h1M1033 463.5h1M1033 480.5h1M1033 496.5h1M1033 513.5h1M1033 529.5h1M1033 546.5h1M1033 562.5h1M1033 579.5h1M1033 596.5h1M1033 612.5h1M1033 629.5h1M1033 645.5h1M1033 662.5h1M1162 17.5h1M1162 33.5h1M1162 50.5h1M1162 66.5h1M1162 83.5h1M1162 100.5h1M1162 116.5h1M1162 133.5h1M1162 149.5h1M1162 166.5h1M1162 182.5h1M1162 199.5h1M1162 215.5h1M1162 232.5h1M1162 248.5h1M1162 265.5h1M1162 281.5h1M1162 298.5h1M1162 314.5h1M1162 331.5h1M1162 348.5h1M1162 364.5h1M1162 381.5h1M1162 397.5h1M1162 414.5h1M1162 430.5h1M1162 447.5h1M1162 463.5h1M1162 480.5h1M1162 496.5h1M1162 513.5h1M1162 529.5h1M1162 546.5h1M1162 562.5h1M1162 579.5h1M1162 596.5h1M1162 612.5h1M1162 629.5h1M1162 645.5h1M1162 662.5h1M25 83.5h1M51 83.5h1M77 83.5h1M103 83.5h1M129 83.5h1M155 83.5h1M181 83.5h1M206 83.5h1M232 83.5h1M258 83.5h1M284 83.5h1M310 83.5h1M336 83.5h1M361 83.5h1M387 83.5h1M413 83.5h1M439 83.5h1M465 83.5h1M491 83.5h1M516 83.5h1M542 83.5h1M568 83.5h1M594 83.5h1M620 83.5h1M646 83.5h1M671 83.5h1M697 83.5h1M723 83.5h1M749 83.5h1M775 83.5h1M801 83.5h1M827 83.5h1M852 83.5h1M878 83.5h1M904 83.5h1M930 83.5h1M956 83.5h1M982 83.5h1M1007 83.5h1M1033 83.5h1M1059 83.5h1M1085 83.5h1M1111 83.5h1M1137 83.5h1M1162 83.5h1M1188 83.5h1M1214 83.5h1M1240 83.5h1M1266 83.5h1M25 166.5h1M51 166.5h1M77 166.5h1M103 166.5h1M129 166.5h1M155 166.5h1M181 166.5h1M206 166.5h1M232 166.5h1M258 166.5h1M284 166.5h1M310 166.5h1M336 166.5h1M361 166.5h1M387 166.5h1M413 166.5h1M439 166.5h1M465 166.5h1M491 166.5h1M516 166.5h1M542 166.5h1M568 166.5h1M594 166.5h1M620 166.5h1M646 166.5h1M671 166.5h1M697 166.5h1M723 166.5h1M749 166.5h1M775 166.5h1M801 166.5h1M827 166.5h1M852 166.5h1M878 166.5h1M904 166.5h1M930 166.5h1M956 166.5h1M982 166.5h1M1007 166.5h1M1033 166.5h1M1059 166.5h1M1085 166.5h1M1111 166.5h1M1137 166.5h1M1162 166.5h1M1188 166.5h1M1214 166.5h1M1240 166.5h1M1266 166.5h1M25 248.5h1M51 248.5h1M77 248.5h1M103 248.5h1M129 248.5h1M155 248.5h1M181 248.5h1M206 248.5h1M232 248.5h1M258 248.5h1M284 248.5h1M310 248.5h1M336 248.5h1M361 248.5h1M387 248.5h1M413 248.5h1M439 248.5h1M465 248.5h1M491 248.5h1M516 248.5h1M542 248.5h1M568 248.5h1M594 248.5h1M620 248.5h1M646 248.5h1M671 248.5h1M697 248.5h1M723 248.5h1M749 248.5h1M775 248.5h1M801 248.5h1M827 248.5h1M852 248.5h1M878 248.5h1M904 248.5h1M930 248.5h1M956 248.5h1M982 248.5h1M1007 248.5h1M1033 248.5h1M1059 248.5h1M1085 248.5h1M1111 248.5h1M1137 248.5h1M1162 248.5h1M1188 248.5h1M1214 248.5h1M1240 248.5h1M1266 248.5h1M25 331.5h1M51 331.5h1M77 331.5h1M103 331.5h1M129 331.5h1M155 331.5h1M181 331.5h1M206 331.5h1M232 331.5h1M258 331.5h1M284 331.5h1M310 331.5h1M336 331.5h1M361 331.5h1M387 331.5h1M413 331.5h1M439 331.5h1M465 331.5h1M491 331.5h1M516 331.5h1M542 331.5h1M568 331.5h1M594 331.5h1M620 331.5h1M646 331.5h1M671 331.5h1M697 331.5h1M723 331.5h1M749 331.5h1M775 331.5h1M801 331.5h1M827 331.5h1M852 331.5h1M878 331.5h1M904 331.5h1M930 331.5h1M956 331.5h1M982 331.5h1M1007 331.5h1M1033 331.5h1M1059 331.5h1M1085 331.5h1M1111 331.5h1M1137 331.5h1M1162 331.5h1M1188 331.5h1M1214 331.5h1M1240 331.5h1M1266 331.5h1M25 414.5h1M51 414.5h1M77 414.5h1M103 414.5h1M129 414.5h1M155 414.5h1M181 414.5h1M206 414.5h1M232 414.5h1M258 414.5h1M284 414.5h1M310 414.5h1M336 414.5h1M361 414.5h1M387 414.5h1M413 414.5h1M439 414.5h1M465 414.5h1M491 414.5h1M516 414.5h1M542 414.5h1M568 414.5h1M594 414.5h1M620 414.5h1M646 414.5h1M671 414.5h1M697 414.5h1M723 414.5h1M749 414.5h1M775 414.5h1M801 414.5h1M827 414.5h1M852 414.5h1M878 414.5h1M904 414.5h1M930 414.5h1M956 414.5h1M982 414.5h1M1007 414.5h1M1033 414.5h1M1059 414.5h1M1085 414.5h1M1111 414.5h1M1137 414.5h1M1162 414.5h1M1188 414.5h1M1214 414.5h1M1240 414.5h1M1266 414.5h1M25 496.5h1M51 496.5h1M77 496.5h1M103 496.5h1M129 496.5h1M155 496.5h1M181 496.5h1M206 496.5h1M232 496.5h1M258 496.5h1M284 496.5h1M310 496.5h1M336 496.5h1M361 496.5h1M387 496.5h1M413 496.5h1M439 496.5h1M465 496.5h1M491 496.5h1M516 496.5h1M542 496.5h1M568 496.5h1M594 496.5h1M620 496.5h1M646 496.5h1M671 496.5h1M697 496.5h1M723 496.5h1M749 496.5h1M775 496.5h1M801 496.5h1M827 496.5h1M852 496.5h1M878 496.5h1M904 496.5h1M930 496.5h1M956 496.5h1M982 496.5h1M1007 496.5h1M1033 496.5h1M1059 496.5h1M1085 496.5h1M1111 496.5h1M1137 496.5h1M1162 496.5h1M1188 496.5h1M1214 496.5h1M1240 496.5h1M1266 496.5h1M25 579.5h1M51 579.5h1M77 579.5h1M103 579.5h1M129 579.5h1M155 579.5h1M181 579.5h1M206 579.5h1M232 579.5h1M258 579.5h1M284 579.5h1M310 579.5h1M336 579.5h1M361 579.5h1M387 579.5h1M413 579.5h1M439 579.5h1M465 579.5h1M491 579.5h1M516 579.5h1M542 579.5h1M568 579.5h1M594 579.5h1M620 579.5h1M646 579.5h1M671 579.5h1M697 579.5h1M723 579.5h1M749 579.5h1M775 579.5h1M801 579.5h1M827 579.5h1M852 579.5h1M878 579.5h1M904 579.5h1M930 579.5h1M956 579.5h1M982 579.5h1M1007 579.5h1M1033 579.5h1M1059 579.5h1M1085 579.5h1M1111 579.5h1M1137 579.5h1M1162 579.5h1M1188 579.5h1M1214 579.5h1M1240 579.5h1M1266 579.5h1" stroke="#c4c4c4" stroke-width="1" shape-rendering="crispEdges" fill="none"/>
<path d="M0 249.9L1 247.9L2 246.1L3 244.2L4 242.4L5 240.7L6 239.0L7 237.3L8 235.7L9 234.2V242.2V228.2V234.2L10 232.7L11 231.2L12 229.9L13 228.5L14 227.2L15 226.0L16 224.8L17 223.7L18 222.7L19 221.7L20 220.7L21 219.9L22 219.1L23 218.3L24 217.6L25 217.0L26 216.4L27 215.9L28 215.4L29 215.0L30 214.7L31 214.4L32 214.2L33 214.1L34 214.0L35 214.0L36 214.1L37 214.2L38 214.3L39 214.6L40 214.9L41 215.2L42 215.7L43 216.1L44 216.7L45 217.3L46 218.0L47 218.7L48 219.5L49 220.3L50 221.3L51 222.2L52 223.3L53 224.3L54 225.5L55 226.7L56 227.9L57 229.3L58 230.6L59 232.0L60 233.5L61 235.0L62 236.6L63 238.2L64 239.9L65 241.6L66 243.4L67 245.2L68 247.1L69 249.0L70 251.0L71 253.0L72 255.0L73 257.1L74 259.2L75 261.3L76 263.5L77 265.8L78 268.0L79 270.3L80 272.7L81 275.0L82 277.4L83 279.8L84 282.3L85 284.8L86 287.3L87 289.8L88 292.3L89 294.9L90 297.5L91 300.1L92 302.7L93 305.3L94 307.9L95 310.6L96 313.3L97 315.9L98 318.6L99 321.3L100 324.0L101 326.7L102 329.4L103 332.1L104 334.8L105 337.4L106 340.1L107 342.8L108 345.5L109 348.1L110 350.8L111 353.4L112 356.1L113 358.7L114 361.3L115 363.9L116 366.4L117 369.0L118 371.5L119 374.0L120 376.5L121 378.9L122 381.3L123 383.7L124 386.1L125 388.4L126 390.7L127 393.0L128 395.2L129 397.4L130 399.6L131 401.7L132 403.8L133 405.8L134 407.8L135 409.8L136 411.7L137 413.6L138 415.4L139 417.2L140 418.9L141 420.6L142 422.2L143 423.8L144 425.3V420.3V433.3V425.3L145 426.8L146 428.2L147 429.6L148 430.9L149 432.2L150 433.4L151 434.5L152 435.6L153 436.7L154 437.6L155 438.6L156 439.4L157 440.2L158 441.0L159 441.6L160 442.2L161 442.8L162 443.3L163 443.7L164 444.1L165 444.4L166 444.6L167 444.8L168 444.9L169 445.0L170 445.0L171 444.9L172 444.8L173 444.6L174 444.3L175 444.0L176 443.6L177 443.2L178 442.7L179 442.1L180 441.5L181 440.8L182 440.0L183 439.2L184 438.3L185 437.4L186 436.4L187 435.4L188 434.3L189 433.1L190 431.9L191 430.6L192 429.3L193 427.9L194 426.5L195 425.0L196 423.4L197 421.8L198 420.2L199 418.5L200 416.7L201 415.0L202 413.1L203 411.2L204 409.3L205 407.3L206 405.3L207 403.3L208 401.2L209 399.1L210 396.9L211 394.7L212 392.4L213 390.2L214 387.9L215 385.5L216 383.1L217 380.7L218 378.3L219 375.9L220 373.4L221 370.9L222 368.3L223 365.8L224 363.2L225 360.6L226 358.0L227 355.4L228 352.8L229 350.1L230 347.5L231 344.8L232 342.1L233 339.5L234 336.8L235 334.1L236 331.4L237 328.7L238 326.0L239 323.3L240 320.6L241 317.9L242 315.3L243 312.6L244 309.9L245 307.3L246 304.6L247 302.0L248 299.4L249 296.8L250 294.2L251 291.7L252 289.1L253 286.6L254 284.1L255 281.7L256 279.2L257 276.8L258 274.4L259 272.1L260 269.8L261 267.5L262 265.2L263 263.0L264 260.8L265 258.7L266 256.6L267 254.5L268 252.5L269 250.5L270 248.5L271 246.6L272 244.8L273 243.0L274 241.2L275 239.5L276 237.8L277 236.2L278 234.6V242.6V228.6V234.6L279 233.1L280 231.7L281 230.3L282 228.9L283 227.6L284 226.4L285 225.2L286 224.1L287 223.0L288 222.0L289 221.0L290 220.1L291 219.3L292 218.5L293 217.8L294 217.1L295 216.6L296 216.0L297 215.5L298 215.1L299 214.8L300 214.5L301 214.3L302 214.1L303 214.0L304 214.0L305 214.0L306 214.1L307 214.3L308 214.5L309 214.8L310 215.1L311 215.5L312 216.0L313 216.5L314 217.1L315 217.8L316 218.5L317 219.3L318 220.1L319 221.0L320 221.9L321 222.9L322 224.0L323 225.1L324 226.3L325 227.6L326 228.9L327 230.2L328 231.6L329 233.1L330 234.6L331 236.1L332 237.7L333 239.4L334 241.1L335 242.9L336 244.7L337 246.5L338 248.4L339 250.4L340 252.4L341 254.4L342 256.4L343 258.6L344 260.7L345 262.9L346 265.1L347 267.4L348 269.6L349 272.0L350 274.3L351 276.7L352 279.1L353 281.5L354 284.0L355 286.5L356 289.0L357 291.5L358 294.1L359 296.7L360 299.3L361 301.9L362 304.5L363 307.1L364 309.8L365 312.5L366 315.1L367 317.8L368 320.5L369 323.2L370 325.9L371 328.6L372 331.3L373 333.9L374 336.6L375 339.3L376 342.0L377 344.7L378 347.3L379 350.0L380 352.7L381 355.3L382 357.9L383 360.5L384 363.1L385 365.7L386 368.2L387 370.7L388 373.2L389 375.7L390 378.2L391 380.6L392 383.0L393 385.4L394 387.7L395 390.0L396 392.3L397 394.6L398 396.8L399 398.9L400 401.1L401 403.2L402 405.2L403 407.2L404 409.2L405 411.1L406 413.0L407 414.9L408 416.7L409 418.4L410 420.1L411 421.7L412 423.3L413 424.9V419.9V432.9V424.9L414 426.4L415 427.8L416 429.2L417 430.5L418 431.8L419 433.0L420 434.2L421 435.3L422 436.4L423 437.4L424 438.3L425 439.2L426 440.0L427 440.7L428 441.4L429 442.1L430 442.6L431 443.2L432 443.6L433 444.0L434 444.3L435 444.6L436 444.8L437 444.9L438 445.0L439 445.0L440 444.9L441 444.8L442 444.7L443 444.4L444 444.1L445 443.7L446 443.3L447 442.8L448 442.3L449 441.7L450 441.0L451 440.3L452 439.5L453 438.6L454 437.7L455 436.7L456 435.7L457 434.6L458 433.5L459 432.3L460 431.0L461 429.7L462 428.3L463 426.9L464 425.4L465 423.9L466 422.3L467 420.7L468 419.0L469 417.3L470 415.5L471 413.7L472 411.8L473 409.9L474 407.9L475 405.9L476 403.9L477 401.8L478 399.7L479 397.5L480 395.3L481 393.1L482 390.8L483 388.5L484 386.2L485 383.9L486 381.5L487 379.0L488 376.6L489 374.1L490 371.6L491 369.1L492 366.6L493 364.0L494 361.4L495 358.8L496 356.2L497 353.6L498 350.9L499 348.3L500 345.6L501 342.9L502 340.3L503 337.6L504 334.9L505 332.2L506 329.5L507 326.8L508 324.1L509 321.4L510 318.7L511 316.1L512 313.4L513 310.7L514 308.1L515 305.4L516 302.8L517 300.2L518 297.6L519 295.0L520 292.4L521 289.9L522 287.4L523 284.9L524 282.4L525 280.0L526 277.5L527 275.1L528 272.8L529 270.5L530 268.2L531 265.9L532 263.7L533 261.5L534 259.3L535 257.2L536 255.1L537 253.1L538 251.1L539 249.1L540 247.2L541 245.3L542 243.5L543 241.7L544 240.0L545 238.3L546 236.7L547 235.1V243.1V229.1V235.1L548 233.6L549 232.1L550 230.7L551 229.3L552 228.0L553 226.7L554 225.5L555 224.4L556 223.3L557 222.3L558 221.3L559 220.4L560 219.5L561 218.7L562 218.0L563 217.3L564 216.7L565 216.2L566 215.7L567 215.3L568 214.9L569 214.6L570 214.3L571 214.2L572 214.1L573 214.0L574 214.0L575 214.1L576 214.2L577 214.4L578 214.7L579 215.0L580 215.4L581 215.8L582 216.4L583 216.9L584 217.6L585 218.3L586 219.0L587 219.8L588 220.7L589 221.6L590 222.6L591 223.7L592 224.8L593 226.0L594 227.2L595 228.5L596 229.8L597 231.2L598 232.6L599 234.1L600 235.7L601 237.3L602 238.9L603 240.6L604 242.3L605 244.1L606 246.0L607 247.9L608 249.8L609 251.8L610 253.8L611 255.8L612 257.9L613 260.1L614 262.2L615 264.4L616 266.7L617 269.0L618 271.3L619 273.6L620 276.0L621 278.4L622 280.8L623 283.3L624 285.8L625 288.3L626 290.8L627 293.3L628 295.9L629 298.5L630 301.1L631 303.7L632 306.3L633 309.0L634 311.7L635 314.3L636 317.0L637 319.7L638 322.4L639 325.1L640 327.7L641 330.4L642 333.1L643 335.8L644 338.5L645 341.2L646 343.9L647 346.5L648 349.2L649 351.9L650 354.5L651 357.1L652 359.7L653 362.3L654 364.9L655 367.5L656 370.0L657 372.5L658 375.0L659 377.5L660 379.9L661 382.3L662 384.7L663 387.0L664 389.4L665 391.6L666 393.9L667 396.1L668 398.3L669 400.4L670 402.6L671 404.6L672 406.6L673 408.6L674 410.6L675 412.5L676 414.3L677 416.1L678 417.9L679 419.6L680 421.3L681 422.9L682 424.4L683 425.9V420.9V433.9V425.9L684 427.4L685 428.8L686 430.1L687 431.4L688 432.7L689 433.9L690 435.0L691 436.1L692 437.1L693 438.0L694 438.9L695 439.7L696 440.5L697 441.2L698 441.9L699 442.5L700 443.0L701 443.5L702 443.9L703 444.2L704 444.5L705 444.7L706 444.9L707 445.0L708 445.0L709 445.0L710 444.9L711 444.7L712 444.5L713 444.2L714 443.9L715 443.5L716 443.0L717 442.4L718 441.9L719 441.2L720 440.5L721 439.7L722 438.9L723 438.0L724 437.0L725 436.0L726 434.9L727 433.8L728 432.6L729 431.4L730 430.1L731 428.7L732 427.3L733 425.9L734 424.4L735 422.8L736 421.2L737 419.5L738 417.8L739 416.0L740 414.2L741 412.4L742 410.5L743 408.5L744 406.5L745 404.5L746 402.4L747 400.3L748 398.2L749 396.0L750 393.8L751 391.5L752 389.2L753 386.9L754 384.6L755 382.2L756 379.8L757 377.3L758 374.9L759 372.4L760 369.9L761 367.3L762 364.8L763 362.2L764 359.6L765 357.0L766 354.4L767 351.7L768 349.1L769 346.4L770 343.7L771 341.1L772 338.4L773 335.7L774 333.0L775 330.3L776 327.6L777 324.9L778 322.2L779 319.5L780 316.9L781 314.2L782 311.5L783 308.9L784 306.2L785 303.6L786 301.0L787 298.4L788 295.8L789 293.2L790 290.7L791 288.1L792 285.6L793 283.1L794 280.7L795 278.3L796 275.9L797 273.5L798 271.1L799 268.8L800 266.6L801 264.3L802 262.1L803 259.9L804 257.8L805 255.7L806 253.7L807 251.7L808 249.7L809 247.8L810 245.9L811 244.0L812 242.3L813 240.5L814 238.8L815 237.2L816 235.6L817 234.0V242.0V228.0V234.0L818 232.5L819 231.1L820 229.7L821 228.4L822 227.1L823 225.9L824 224.7L825 223.6L826 222.6L827 221.6L828 220.7L829 219.8L830 219.0L831 218.2L832 217.5L833 216.9L834 216.3L835 215.8L836 215.4L837 215.0L838 214.7L839 214.4L840 214.2L841 214.1L842 214.0L843 214.0L844 214.1L845 214.2L846 214.4L847 214.6L848 214.9L849 215.3L850 215.7L851 216.2L852 216.8L853 217.4L854 218.0L855 218.8L856 219.6L857 220.4L858 221.4L859 222.3L860 223.4L861 224.5L862 225.6L863 226.8L864 228.1L865 229.4L866 230.8L867 232.2L868 233.7L869 235.2L870 236.8L871 238.4L872 240.1L873 241.8L874 243.6L875 245.4L876 247.3L877 249.2L878 251.2L879 253.2L880 255.2L881 257.3L882 259.4L883 261.6L884 263.8L885 266.0L886 268.3L887 270.6L888 272.9L889 275.3L890 277.7L891 280.1L892 282.5L893 285.0L894 287.5L895 290.0L896 292.6L897 295.1L898 297.7L899 300.3L900 302.9L901 305.6L902 308.2L903 310.9L904 313.5L905 316.2L906 318.9L907 321.6L908 324.2L909 326.9L910 329.6L911 332.3L912 335.0L913 337.7L914 340.4L915 343.1L916 345.7L917 348.4L918 351.1L919 353.7L920 356.3L921 358.9L922 361.5L923 364.1L924 366.7L925 369.2L926 371.7L927 374.2L928 376.7L929 379.2L930 381.6L931 384.0L932 386.3L933 388.7L934 391.0L935 393.2L936 395.5L937 397.7L938 399.8L939 401.9L940 404.0L941 406.0L942 408.0L943 410.0L944 411.9L945 413.8L946 415.6L947 417.4L948 419.1L949 420.8L950 422.4L951 424.0L952 425.5V420.5V433.5V425.5L953 427.0L954 428.4L955 429.7L956 431.1L957 432.3L958 433.5L959 434.7L960 435.7L961 436.8L962 437.7L963 438.7L964 439.5L965 440.3L966 441.0L967 441.7L968 442.3L969 442.9L970 443.3L971 443.8L972 444.1L973 444.4L974 444.7L975 444.8L976 444.9L977 445.0L978 445.0L979 444.9L980 444.8L981 444.6L982 444.3L983 444.0L984 443.6L985 443.1L986 442.6L987 442.0L988 441.4L989 440.7L990 439.9L991 439.1L992 438.3L993 437.3L994 436.3L995 435.3L996 434.2L997 433.0L998 431.8L999 430.5L1000 429.1L1001 427.8L1002 426.3L1003 424.8L1004 423.3L1005 421.7L1006 420.0L1007 418.3L1008 416.6L1009 414.8L1010 412.9L1011 411.1L1012 409.1L1013 407.1L1014 405.1L1015 403.1L1016 401.0L1017 398.8L1018 396.7L1019 394.5L1020 392.2L1021 389.9L1022 387.6L1023 385.3L1024 382.9L1025 380.5L1026 378.1L1027 375.6L1028 373.1L1029 370.6L1030 368.1L1031 365.5L1032 363.0L1033 360.4L1034 357.8L1035 355.2L1036 352.5L1037 349.9L1038 347.2L1039 344.5L1040 341.9L1041 339.2L1042 336.5L1043 333.8L1044 331.1L1045 328.4L1046 325.7L1047 323.0L1048 320.3L1049 317.7L1050 315.0L1051 312.3L1052 309.7L1053 307.0L1054 304.4L1055 301.7L1056 299.1L1057 296.5L1058 294.0L1059 291.4L1060 288.9L1061 286.4L1062 283.9L1063 281.4L1064 279.0L1065 276.6L1066 274.2L1067 271.8L1068 269.5L1069 267.2L1070 265.0L1071 262.8L1072 260.6L1073 258.4L1074 256.3L1075 254.3L1076 252.3L1077 250.3L1078 248.3L1079 246.4L1080 244.6L1081 242.8L1082 241.0L1083 239.3L1084 237.7L1085 236.1L1086 234.5V242.5V228.5V234.5L1087 233.0L1088 231.5L1089 230.1L1090 228.8L1091 227.5L1092 226.3L1093 225.1L1094 224.0L1095 222.9L1096 221.9L1097 220.9L1098 220.0L1099 219.2L1100 218.4L1101 217.7L1102 217.1L1103 216.5L1104 216.0L1105 215.5L1106 215.1L1107 214.8L1108 214.5L1109 214.3L1110 214.1L1111 214.0L1112 214.0L1113 214.0L1114 214.1L1115 214.3L1116 214.5L1117 214.8L1118 215.2L1119 215.6L1120 216.0L1121 216.6L1122 217.2L1123 217.8L1124 218.6L1125 219.3L1126 220.2L1127 221.1L1128 222.0L1129 223.0L1130 224.1L1131 225.3L1132 226.4L1133 227.7L1134 229.0L1135 230.3L1136 231.7L1137 233.2L1138 234.7L1139 236.3L1140 237.9L1141 239.6L1142 241.3L1143 243.1L1144 244.9L1145 246.7L1146 248.6L1147 250.6L1148 252.6L1149 254.6L1150 256.7L1151 258.8L1152 260.9L1153 263.1L1154 265.3L1155 267.6L1156 269.9L1157 272.2L1158 274.6L1159 276.9L1160 279.4L1161 281.8L1162 284.3L1163 286.8L1164 289.3L1165 291.8L1166 294.4L1167 296.9L1168 299.5L1169 302.1L1170 304.8L1171 307.4L1172 310.1L1173 312.7L1174 315.4L1175 318.1L1176 320.8L1177 323.4L1178 326.1L1179 328.8L1180 331.5L1181 334.2L1182 336.9L1183 339.6L1184 342.3L1185 344.9L1186 347.6L1187 350.3L1188 352.9L1189 355.5L1190 358.2L1191 360.8L1192 363.4L1193 365.9L1194 368.5L1195 371.0L1196 373.5L1197 376.0L1198 378.4L1199 380.9L1200 383.3L1201 385.6L1202 388.0L1203 390.3L1204 392.6L1205 394.8L1206 397.0L1207 399.2L1208 401.3L1209 403.4L1210 405.4L1211 407.4L1212 409.4L1213 411.3L1214 413.2L1215 415.1L1216 416.8L1217 418.6L1218 420.3L1219 421.9L1220 423.5L1221 425.0V420.0V433.0V425.0L1222 426.5L1223 428.0L1224 429.3L1225 430.7L1226 431.9L1227 433.2L1228 434.3L1229 435.4L1230 436.5L1231 437.5L1232 438.4L1233 439.3L1234 440.1L1235 440.8L1236 441.5L1237 442.1L1238 442.7L1239 443.2L1240 443.6L1241 444.0L1242 444.3L1243 444.6L1244 444.8L1245 444.9L1246 445.0L1247 445.0L1248 444.9L1249 444.8L1250 444.6L1251 444.4L1252 444.1L1253 443.7L1254 443.3L1255 442.8L1256 442.2L1257 441.6L1258 440.9L1259 440.2L1260 439.4L1261 438.5L1262 437.6L1263 436.6L1264 435.6L1265 434.5L1266 433.3L1267 432.1L1268 430.9L1269 429.5L1270 428.2L1271 426.7L1272 425.3L1273 423.7L1274 422.2L1275 420.5L1276 418.8L1277 417.1L1278 415.3L1279 413.5L1280 411.6L1281 409.7L1282 407.7L1283 405.7L1284 403.7L1285 401.6L1286 399.5L1287 397.3L1288 395.1L1289 392.9L1290 390.6L1291 388.3L1292 386.0" fill="none" stroke="#00ff00" stroke-width="1" shape-rendering="crispEdges"/>
<path d="M0 430.3L1 431.7L2 433.1L3 434.4L4 435.7V431.7V440.7V435.7L5 436.9L6 438.1L7 439.2V436.2V443.2V439.2L8 440.2L9 441.2L10 442.1L11 443.0L12 443.8L13 444.5L14 445.2L15 445.8L16 446.4L17 446.9V442.9V448.9V446.9h1V443.9V447.9V446.9h-1L18 447.3L19 447.7L20 448.0L21 448.2L22 448.4L23 448.5L24 448.5L25 448.5V445.5V451.5V448.5h1V446.5V450.5V448.5h-1L26 448.4L27 448.2L28 448.0L29 447.7L30 447.4L31 447.0L32 446.5L33 446.0V443.0V448.0V446.0L34 445.4L35 444.7L36 444.0L37 443.2L38 442.3L39 441.4L40 440.4L41 439.4L42 438.3L43 437.2L44 436.0L45 434.7L46 433.4V430.4V438.4V433.4h1V431.4V437.4V433.4h-1L47 432.0L48 430.6L49 429.1L50 427.5V424.5V430.5V427.5h1V425.5V429.5V427.5h-1L51 425.9L52 424.3L53 422.6L54 420.8V417.8V424.8V420.8L55 419.0L56 417.2L57 415.3L58 413.3L59 411.3L60 409.3L61 407.2L62 405.1L63 403.0L64 400.8L65 398.5L66 396.2L67 393.9V389.9V395.9V393.9L68 391.6L69 389.2L70 386.8L71 384.4L72 381.9L73 379.4L74 376.9L75 374.3L76 371.7L77 369.1L78 366.5L79 363.9L80 361.2V357.2V365.2V361.2h1V358.2V364.2V361.2h-1L81 358.5L82 355.9L83 353.2L84 350.4L85 347.7L86 345.0L87 342.2L88 339.5L89 336.7L90 333.9L91 331.2L92 328.4L93 325.7V322.7V327.7V325.7L94 322.9L95 320.1L96 317.4L97 314.6L98 311.9L99 309.2L100 306.5L101 303.8V297.8V307.8V303.8L102 301.1L103 298.4L104 295.7L105 293.1L106 290.5L107 287.9L108 285.3L109 282.8V277.8V286.8V282.8h1V278.8V285.8V282.8h-1L110 280.2L111 277.7L112 275.3L113 272.8V268.8V274.8V272.8L114 270.4L115 268.1L116 265.7L117 263.4L118 261.1L119 258.9L120 256.7L121 254.6L122 252.5L123 250.4V244.4V254.4V250.4L124 248.4L125 246.4L126 244.4L127 242.6L128 240.7L129 238.9V235.9V240.9V238.9L130 237.2L131 235.5L132 233.8L133 232.3V227.3V235.3V232.3L134 230.7L135 229.2L136 227.8L137 226.4L138 225.1L139 223.9L140 222.7L141 221.5V218.5V223.5V221.5L142 220.4L143 219.4L144 218.5L145 217.5L146 216.7L147 215.9L148 215.2L149 214.6L150 214.0L151 213.4V208.4V217.4V213.4L152 213.0L153 212.6L154 212.2L155 212.0L156 211.7L157 211.6L158 211.5L159 211.5L160 211.6L161 211.7V205.7V216.7V211.7h1V206.7V215.7V211.7h-1L162 211.8L163 212.1L164 212.4V207.4V217.4V212.4L165 212.8L166 213.2L167 213.7V210.7V217.7V213.7L168 214.2L169 214.9L170 215.6L171 216.3L172 217.1L173 218.0L174 218.9L175 219.9L176 221.0L177 222.1L178 223.2L179 224.5L180 225.8V219.8V229.8V225.8L181 227.1L182 228.5L183 230.0L184 231.5L185 233.0L186 234.6L187 236.3L188 238.0L189 239.8L190 241.6L191 243.5L192 245.4L193 247.4V242.4V249.4V247.4L194 249.4L195 251.4L196 253.5L197 255.6L198 257.8L199 260.0V256.0V262.0V260.0L200 262.3L201 264.6L202 266.9L203 269.2V264.2V272.2V269.2L204 271.6L205 274.0L206 276.5L207 279.0L208 281.5L209 284.0L210 286.6L211 289.2V283.2V294.2V289.2h1V284.2V293.2V289.2h-1L212 291.8L213 294.4L214 297.0L215 299.7L216 302.4L217 305.1L218 307.8L219 310.5V304.5V314.5V310.5L220 313.3L221 316.0L222 318.7L223 321.5L224 324.3L225 327.0L226 329.8L227 332.6L228 335.3L229 338.1L230 340.8L231 343.6L232 346.3L233 349.1L234 351.8L235 354.5L236 357.2L237 359.9V353.9V363.9V359.9L238 362.5L239 365.2L240 367.8L241 370.4L242 373.0L243 375.6V369.6V378.6V375.6h1V370.6V377.6V375.6h-1L244 378.1L245 380.6L246 383.1L247 385.6V381.6V388.6V385.6L248 388.0L249 390.4L250 392.8V386.8V395.8V392.8h1V387.8V394.8V392.8h-1L251 395.1L252 397.4L253 399.6V395.6V404.6V399.6L254 401.9L255 404.0L256 406.2L257 408.3L258 410.3L259 412.3L260 414.3L261 416.2L262 418.1L263 419.9V414.9V422.9V419.9L264 421.7L265 423.4L266 425.1L267 426.7L268 428.3L269 429.8L270 431.3L271 432.7L272 434.0L273 435.3V432.3V440.3V435.3L274 436.6L275 437.7L276 438.9L277 439.9L278 440.9L279 441.9L280 442.8L281 443.6L282 444.3L283 445.0L284 445.7L285 446.2L286 446.7L287 447.2L288 447.6L289 447.9L290 448.1L291 448.3V442.3V453.3V448.3h1V443.3V452.3V448.3h-1L292 448.4L293 448.5L294 448.5V442.5V453.5V448.5h1V443.5V452.5V448.5h-1L295 448.4L296 448.3L297 448.1V444.1V453.1V448.1h1V445.1V452.1V448.1h-1L298 447.8L299 447.5L300 447.1L301 446.6L302 446.1L303 445.5V442.5V447.5V445.5h1V443.5V446.5V445.5h-1L304 444.9L305 444.2L306 443.4L307 442.6V439.6V446.6V442.6L308 441.7L309 440.7L310 439.7V435.7V444.7V439.7h1V436.7V443.7V439.7h-1L311 438.7L312 437.5L313 436.3L314 435.1L315 433.8L316 432.4V427.4V436.4V432.4L317 431.0L318 429.5L319 428.0V422.0V433.0V428.0L320 426.4L321 424.8L322 423.1L323 421.4L324 419.6L325 417.7V414.7V420.7V417.7h1V415.7V419.7V417.7h-1L326 415.8L327 413.9L328 411.9L329 409.9L330 407.9L331 405.8V400.8V410.8V405.8L332 403.6L333 401.4L334 399.2L335 396.9V393.9V399.9V396.9L336 394.6L337 392.3L338 389.9L339 387.5L340 385.1L341 382.6L342 380.1L343 377.6L344 375.1L345 372.5V367.5V375.5V372.5L346 369.9L347 367.3L348 364.7V359.7V366.7V364.7L349 362.0L350 359.4L351 356.7L352 354.0L353 351.2L354 348.5V343.5V351.5V348.5h1V344.5V350.5V348.5h-1L355 345.8L356 343.0L357 340.3L358 337.5V332.5V340.5V337.5L359 334.8L360 332.0L361 329.2L362 326.5L363 323.7L364 321.0L365 318.2L366 315.5L367 312.7L368 310.0L369 307.3L370 304.6L371 301.9L372 299.2L373 296.5L374 293.9L375 291.3L376 288.7V284.7V291.7V288.7L377 286.1L378 283.5L379 281.0L380 278.5L381 276.0L382 273.6L383 271.2L384 268.8L385 266.4L386 264.1L387 261.8L388 259.6L389 257.4V253.4V260.4V257.4L390 255.2L391 253.1L392 251.0L393 249.0L394 247.0L395 245.0V242.0V247.0V245.0L396 243.1L397 241.3L398 239.5L399 237.7L400 236.0L401 234.3L402 232.7L403 231.2V226.2V234.2V231.2L404 229.7L405 228.2L406 226.8L407 225.5L408 224.2L409 223.0V217.0V227.0V223.0L410 221.9L411 220.8L412 219.7L413 218.7L414 217.8L415 217.0V214.0V220.0V217.0h1V215.0V219.0V217.0h-1L416 216.2L417 215.4L418 214.7L419 214.1L420 213.6L421 213.1L422 212.7L423 212.3V208.3V216.3V212.3h1V209.3V215.3V212.3h-1L424 212.0L425 211.8L426 211.6L427 211.5L428 211.5L429 211.5L430 211.6L431 211.8L432 212.0L433 212.3V209.3V217.3V212.3L434 212.6L435 213.1L436 213.5L437 214.1L438 214.7L439 215.3V212.3V217.3V215.3L440 216.1L441 216.9L442 217.7L443 218.6L444 219.6L445 220.6L446 221.7L447 222.9L448 224.1L449 225.4L450 226.7L451 228.1L452 229.5L453 231.0L454 232.6L455 234.2L456 235.8L457 237.5V233.5V242.5V237.5L458 239.3L459 241.1L460 242.9L461 244.8L462 246.8L463 248.8L464 250.8L465 252.9V247.9V254.9V252.9L466 255.0L467 257.1L468 259.4L469 261.6L470 263.9L471 266.2L472 268.5L473 270.9L474 273.3L475 275.8L476 278.2L477 280.7L478 283.3V277.3V288.3V283.3h1V278.3V287.3V283.3h-1L479 285.8L480 288.4L481 291.0V287.0V294.0V291.0L482 293.6L483 296.3L484 298.9V294.9V303.9V298.9L485 301.6L486 304.3L487 307.0L488 309.7V303.7V313.7V309.7h1V304.7V312.7V309.7h-1L489 312.4L490 315.2L491 317.9L492 320.7L493 323.4L494 326.2L495 329.0L496 331.7L497 334.5L498 337.2V333.2V339.2V337.2h1V334.2V338.2V337.2h-1L499 340.0L500 342.8L501 345.5L502 348.2L503 351.0L504 353.7L505 356.4L506 359.1L507 361.7L508 364.4L509 367.0L510 369.6L511 372.2V369.2V375.2V372.2h1V370.2V374.2V372.2h-1L512 374.8L513 377.4L514 379.9L515 382.4L516 384.8L517 387.3L518 389.7L519 392.1L520 394.4L521 396.7L522 399.0L523 401.2L524 403.4L525 405.5L526 407.6L527 409.7L528 411.7L529 413.7V409.7V416.7V413.7h1V410.7V415.7V413.7h-1L530 415.6L531 417.5L532 419.4L533 421.2V416.2V424.2V421.2L534 422.9L535 424.6L536 426.2L537 427.8L538 429.4L539 430.8V425.8V435.8V430.8L540 432.3L541 433.6L542 434.9V429.9V439.9V434.9L543 436.2L544 437.4L545 438.5L546 439.6L547 440.6L548 441.6L549 442.5L550 443.3L551 444.1L552 444.8L553 445.5L554 446.1L555 446.6L556 447.1L557 447.5L558 447.8L559 448.1L560 448.3V442.3V451.3V448.3L561 448.4L562 448.5L563 448.5L564 448.4L565 448.3L566 448.1L567 447.9L568 447.6L569 447.2L570 446.8V443.8V451.8V446.8L571 446.3L572 445.7L573 445.1L574 444.4L575 443.7L576 442.8L577 442.0L578 441.0L579 440.0L580 439.0V436.0V442.0V439.0h1V437.0V441.0V439.0h-1L581 437.9L582 436.7L583 435.5L584 434.2L585 432.8L586 431.4L587 430.0L588 428.5V425.5V430.5V428.5h1V426.5V429.5V428.5h-1L589 426.9L590 425.3L591 423.6L592 421.9L593 420.1L594 418.3L595 416.4L596 414.5L597 412.5L598 410.5V404.5V412.5V410.5L599 408.5L600 406.4L601 404.3V400.3V407.3V404.3h1V401.3V406.3V404.3h-1L602 402.1L603 399.9L604 397.6L605 395.3L606 393.0L607 390.6L608 388.3L609 385.8L610 383.4L611 380.9L612 378.4L613 375.8L614 373.3L615 370.7L616 368.1L617 365.5L618 362.8L619 360.2V357.2V365.2V360.2L620 357.5L621 354.8L622 352.1L623 349.3L624 346.6L625 343.9L626 341.1L627 338.4L628 335.6L629 332.8L630 330.1L631 327.3L632 324.5L633 321.8L634 319.0L635 316.3L636 313.5L637 310.8V307.8V315.8V310.8h1V308.8V314.8V310.8h-1L638 308.1L639 305.4L640 302.7L641 300.0L642 297.3L643 294.7L644 292.0L645 289.4L646 286.9L647 284.3V280.3V288.3V284.3L648 281.8L649 279.2L650 276.8L651 274.3L652 271.9L653 269.5L654 267.1L655 264.8L656 262.5L657 260.3V254.3V263.3V260.3L658 258.0L659 255.9L660 253.7L661 251.6L662 249.6L663 247.6V243.6V252.6V247.6h1V244.6V251.6V247.6h-1L664 245.6L665 243.7L666 241.8V235.8V246.8V241.8h1V236.8V245.8V241.8h-1L667 240.0L668 238.2L669 236.5L670 234.8L671 233.2L672 231.6L673 230.1L674 228.7L675 227.3L676 225.9L677 224.6L678 223.4L679 222.2V218.2V227.2V222.2h1V219.2V226.2V222.2h-1L680 221.1L681 220.0L682 219.0L683 218.1L684 217.2L685 216.4L686 215.6L687 214.9L688 214.3L689 213.7L690 213.2L691 212.8L692 212.4V207.4V214.4V212.4L693 212.1L694 211.9L695 211.7L696 211.6V206.6V214.6V211.6h1V207.6V213.6V211.6h-1L697 211.5L698 211.5L699 211.6L700 211.7V205.7V214.7V211.7L701 211.9L702 212.2L703 212.5V206.5V217.5V212.5h1V207.5V216.5V212.5h-1L704 212.9L705 213.4L706 213.9L707 214.5L708 215.1L709 215.8L710 216.6L711 217.5L712 218.4L713 219.3L714 220.3L715 221.4L716 222.5V218.5V225.5V222.5L717 223.7L718 225.0L719 226.3L720 227.7L721 229.1L722 230.6L723 232.1L724 233.7L725 235.3L726 237.0V231.0V241.0V237.0h1V232.0V240.0V237.0h-1L727 238.7L728 240.5L729 242.4L730 244.2L731 246.2L732 248.2V243.2V250.2V248.2L733 250.2L734 252.2L735 254.3V249.3V259.3V254.3h1V250.3V258.3V254.3h-1L736 256.5L737 258.7L738 260.9V254.9V264.9V260.9L739 263.2L740 265.5L741 267.8L742 270.2L743 272.6L744 275.0V272.0V277.0V275.0L745 277.5L746 280.0L747 282.5L748 285.0L749 287.6L750 290.2L751 292.8L752 295.5L753 298.1L754 300.8L755 303.5L756 306.2L757 308.9L758 311.6L759 314.3L760 317.1L761 319.8L762 322.6V318.6V324.6V322.6h1V319.6V323.6V322.6h-1L763 325.4L764 328.1L765 330.9L766 333.7L767 336.4L768 339.2V336.2V342.2V339.2h1V337.2V341.2V339.2h-1L769 341.9L770 344.7L771 347.4L772 350.1V344.1V354.1V350.1h1V345.1V353.1V350.1h-1L773 352.9L774 355.6L775 358.3L776 360.9L777 363.6L778 366.2L779 368.9L780 371.5L781 374.0L782 376.6V370.6V380.6V376.6h1V371.6V379.6V376.6h-1L783 379.1L784 381.6L785 384.1V380.1V389.1V384.1L786 386.6L787 389.0L788 391.3L789 393.7L790 396.0L791 398.3V395.3V400.3V398.3L792 400.5L793 402.7L794 404.9V400.9V406.9V404.9h1V401.9V405.9V404.9h-1L795 407.0L796 409.1L797 411.1V405.1V413.1V411.1h1V406.1V412.1V411.1h-1L798 413.1L799 415.1L800 417.0L801 418.8L802 420.6L803 422.4L804 424.1L805 425.8L806 427.4L807 428.9V422.9V432.9V428.9L808 430.4L809 431.8L810 433.2V429.2V435.2V433.2L811 434.6L812 435.8L813 437.0L814 438.2L815 439.3L816 440.3V437.3V443.3V440.3h1V438.3V442.3V440.3h-1L817 441.3L818 442.2L819 443.1L820 443.9L821 444.6L822 445.3V440.3V448.3V445.3h1V441.3V447.3V445.3h-1L823 445.9L824 446.4L825 446.9L826 447.3L827 447.7L828 448.0L829 448.2L830 448.4L831 448.5L832 448.5V444.5V452.5V448.5h1V445.5V451.5V448.5h-1L833 448.5L834 448.4L835 448.2V443.2V450.2V448.2h1V444.2V449.2V448.2h-1L836 448.0L837 447.7L838 447.3L839 446.9L840 446.4L841 445.9L842 445.3L843 444.6L844 443.9L845 443.1L846 442.2L847 441.3L848 440.3V436.3V445.3V440.3h1V437.3V444.3V440.3h-1L849 439.3L850 438.2L851 437.0L852 435.8L853 434.6L854 433.2L855 431.8L856 430.4V427.4V435.4V430.4L857 428.9L858 427.4L859 425.8L860 424.1L861 422.4L862 420.6L863 418.8L864 417.0L865 415.1L866 413.1V407.1V417.1V413.1L867 411.1L868 409.1L869 407.0L870 404.9V399.9V407.9V404.9L871 402.7L872 400.5L873 398.3L874 396.0L875 393.7L876 391.4L877 389.0L878 386.6L879 384.1L880 381.6L881 379.1L882 376.6L883 374.1V370.1V379.1V374.1L884 371.5L885 368.9L886 366.3V362.3V368.3V366.3h1V363.3V367.3V366.3h-1L887 363.6L888 361.0L889 358.3L890 355.6L891 352.9L892 350.2L893 347.4L894 344.7L895 341.9L896 339.2L897 336.4L898 333.7L899 330.9V325.9V335.9V330.9h1V326.9V334.9V330.9h-1L900 328.1L901 325.4L902 322.6V316.6V326.6V322.6L903 319.9L904 317.1L905 314.4L906 311.6L907 308.9L908 306.2L909 303.5L910 300.8L911 298.1L912 295.5L913 292.8L914 290.2L915 287.6V282.6V289.6V287.6L916 285.1L917 282.5L918 280.0L919 277.5V272.5V282.5V277.5h1V273.5V281.5V277.5h-1L920 275.0L921 272.6L922 270.2L923 267.8L924 265.5L925 263.2V258.2V267.2V263.2h1V259.2V266.2V263.2h-1L926 260.9L927 258.7L928 256.5L929 254.4L930 252.3L931 250.2V246.2V254.2V250.2h1V247.2V253.2V250.2h-1L932 248.2L933 246.2L934 244.3L935 242.4L936 240.5L937 238.7V232.7V240.7V238.7L938 237.0L939 235.3L940 233.7L941 232.1L942 230.6L943 229.1L944 227.7L945 226.3L946 225.0L947 223.7V219.7V226.7V223.7L948 222.5L949 221.4L950 220.3V217.3V224.3V220.3L951 219.3L952 218.4L953 217.5L954 216.6V210.6V218.6V216.6h1V211.6V217.6V216.6h-1L955 215.9L956 215.1L957 214.5L958 213.9L959 213.4L960 212.9V207.9V215.9V212.9h1V208.9V214.9V212.9h-1L961 212.5L962 212.2L963 211.9L964 211.7L965 211.6L966 211.5L967 211.5L968 211.6L969 211.7L970 211.9V207.9V216.9V211.9L971 212.1L972 212.4L973 212.8L974 213.2L975 213.7L976 214.3L977 214.9L978 215.6L979 216.4L980 217.2L981 218.1L982 219.0L983 220.0V214.0V223.0V220.0h1V215.0V222.0V220.0h-1L984 221.1L985 222.2L986 223.4L987 224.6L988 225.9L989 227.2L990 228.7L991 230.1L992 231.6L993 233.2V229.2V235.2V233.2L994 234.8L995 236.5L996 238.2L997 240.0L998 241.8L999 243.7L1000 245.6L1001 247.6L1002 249.6L1003 251.6L1004 253.7L1005 255.8L1006 258.0V252.0V261.0V258.0L1007 260.2L1008 262.5L1009 264.8L1010 267.1L1011 269.5L1012 271.9L1013 274.3L1014 276.7L1015 279.2L1016 281.7L1017 284.3L1018 286.8L1019 289.4L1020 292.0L1021 294.7L1022 297.3L1023 300.0L1024 302.7V299.7V305.7V302.7h1V300.7V304.7V302.7h-1L1025 305.4L1026 308.1L1027 310.8V306.8V314.8V310.8L1028 313.5L1029 316.3L1030 319.0L1031 321.8L1032 324.5L1033 327.3L1034 330.1L1035 332.8V326.8V334.8V332.8L1036 335.6L1037 338.3L1038 341.1L1039 343.9L1040 346.6L1041 349.3L1042 352.1L1043 354.8L1044 357.5L1045 360.1L1046 362.8L1047 365.5L1048 368.1V364.1V373.1V368.1h1V365.1V372.1V368.1h-1L1049 370.7L1050 373.3L1051 375.8L1052 378.4L1053 380.9L1054 383.4L1055 385.8L1056 388.2V385.2V390.2V388.2L1057 390.6L1058 393.0L1059 395.3V389.3V399.3V395.3L1060 397.6L1061 399.9L1062 402.1L1063 404.2L1064 406.4L1065 408.5L1066 410.5L1067 412.5L1068 414.5L1069 416.4L1070 418.3L1071 420.1L1072 421.9L1073 423.6L1074 425.3L1075 426.9L1076 428.4L1077 430.0V425.0V433.0V430.0L1078 431.4L1079 432.8L1080 434.2L1081 435.5V431.5V440.5V435.5L1082 436.7L1083 437.9L1084 439.0L1085 440.0L1086 441.0L1087 442.0L1088 442.8L1089 443.7V440.7V448.7V443.7L1090 444.4L1091 445.1L1092 445.7L1093 446.3L1094 446.8L1095 447.2V444.2V450.2V447.2h1V445.2V449.2V447.2h-1L1096 447.6L1097 447.9L1098 448.1L1099 448.3V443.3V452.3V448.3L1100 448.4L1101 448.5L1102 448.5L1103 448.4L1104 448.3L1105 448.1L1106 447.8L1107 447.5L1108 447.1L1109 446.6L1110 446.1L1111 445.5L1112 444.8V439.8V447.8V444.8h1V440.8V446.8V444.8h-1L1113 444.1L1114 443.3L1115 442.5V436.5V446.5V442.5L1116 441.6L1117 440.6L1118 439.6V435.6V444.6V439.6h1V436.6V443.6V439.6h-1L1119 438.5L1120 437.4L1121 436.2L1122 434.9L1123 433.6L1124 432.3L1125 430.8L1126 429.4L1127 427.8L1128 426.2V421.2V431.2V426.2L1129 424.6L1130 422.9L1131 421.2L1132 419.4L1133 417.5L1134 415.7L1135 413.7L1136 411.7L1137 409.7L1138 407.7L1139 405.5L1140 403.4L1141 401.2L1142 399.0L1143 396.7L1144 394.4L1145 392.1L1146 389.7V386.7V392.7V389.7h1V387.7V391.7V389.7h-1L1147 387.3L1148 384.9L1149 382.4V376.4V384.4V382.4h1V377.4V383.4V382.4h-1L1150 379.9L1151 377.4L1152 374.8V368.8V378.8V374.8h1V369.8V377.8V374.8h-1L1153 372.3L1154 369.7L1155 367.0L1156 364.4V361.4V366.4V364.4h1V362.4V365.4V364.4h-1L1157 361.8L1158 359.1L1159 356.4L1160 353.7L1161 351.0L1162 348.3L1163 345.5L1164 342.8L1165 340.0L1166 337.3V332.3V341.3V337.3h1V333.3V340.3V337.3h-1L1167 334.5L1168 331.7L1169 329.0L1170 326.2L1171 323.4L1172 320.7L1173 317.9L1174 315.2L1175 312.4L1176 309.7L1177 307.0L1178 304.3L1179 301.6L1180 298.9L1181 296.3L1182 293.6L1183 291.0L1184 288.4V283.4V290.4V288.4L1185 285.8L1186 283.3L1187 280.7L1188 278.2V272.2V283.2V278.2h1V273.2V282.2V278.2h-1L1189 275.8L1190 273.3L1191 270.9L1192 268.5V265.5V273.5V268.5L1193 266.2L1194 263.9L1195 261.6L1196 259.4L1197 257.2L1198 255.0L1199 252.9L1200 250.8V245.8V253.8V250.8h1V246.8V252.8V250.8h-1L1201 248.8L1202 246.8L1203 244.8L1204 242.9L1205 241.1L1206 239.3L1207 237.5L1208 235.8V230.8V237.8V235.8L1209 234.2L1210 232.6L1211 231.0V226.0V235.0V231.0L1212 229.5L1213 228.1L1214 226.7V222.7V228.7V226.7L1215 225.4L1216 224.1L1217 222.9L1218 221.7L1219 220.6L1220 219.6V214.6V223.6V219.6h1V215.6V222.6V219.6h-1L1221 218.6L1222 217.7L1223 216.9L1224 216.1L1225 215.3L1226 214.7L1227 214.1L1228 213.5V210.5V217.5V213.5L1229 213.1L1230 212.6L1231 212.3L1232 212.0L1233 211.8L1234 211.6L1235 211.5L1236 211.5L1237 211.5L1238 211.6L1239 211.8L1240 212.0L1241 212.3L1242 212.7L1243 213.1L1244 213.6L1245 214.1L1246 214.7V209.7V216.7V214.7h1V210.7V215.7V214.7h-1L1247 215.4L1248 216.2L1249 216.9V211.9V219.9V216.9h1V212.9V218.9V216.9h-1L1250 217.8L1251 218.7L1252 219.7L1253 220.8L1254 221.9L1255 223.0V217.0V227.0V223.0h1V218.0V226.0V223.0h-1L1256 224.2L1257 225.5L1258 226.8L1259 228.2L1260 229.7L1261 231.2V225.2V233.2V231.2L1262 232.7L1263 234.3L1264 236.0L1265 237.7L1266 239.4L1267 241.3L1268 243.1L1269 245.0L1270 247.0L1271 249.0L1272 251.0L1273 253.1L1274 255.2V249.2V258.2V255.2L1275 257.4L1276 259.6L1277 261.8V255.8V266.8V261.8L1278 264.1L1279 266.4L1280 268.8L1281 271.1V266.1V276.1V271.1h1V267.1V275.1V271.1h-1L1282 273.6L1283 276.0L1284 278.5L1285 281.0L1286 283.5L1287 286.1L1288 288.6L1289 291.3L1290 293.9L1291 296.5V292.5V299.5V296.5L1292 299.2" fill="none" stroke="#00ffff" stroke-width="1" shape-rendering="crispEdges"/>
</svg>
<!-- plot toolbar icons -->
<svg class="ic" style="left:268px;top:116px" viewBox="0 0 16 16"><rect width="16" height="16" fill="#000"/><path d="M3 12.500h3.500v-4.500h6v-4" fill="none" stroke="#10e010" stroke-width="2"/><rect x="2" y="11.500" width="2" height="2" fill="#fff"/><rect x="11.500" y="2.500" width="2" height="2" fill="#fff"/><rect x="5.500" y="7" width="2" height="2" fill="#fff"/></svg>
<div class="vsep" style="left:289px;top:113px;height:22px;background:#9a9eac"></div>
<svg class="ic" style="left:297px;top:116px" viewBox="0 0 16 16"><rect width="16" height="16" fill="#000"/><path d="M1.500 8c1-6 4.500-7 6 0s4 3 7 0" fill="none" stroke="#10e010" stroke-width="1.700"/><path d="M1.500 9.500c1 5 5 4 6 1s3 3 7 1.500" fill="none" stroke="#10e0f0" stroke-width="1.700"/></svg>
<svg class="ic" style="left:320px;top:116px" viewBox="0 0 16 16"><rect width="16" height="16" fill="#000"/><path d="M1 7.500l6-4.500l8 4" fill="none" stroke="#10e010" stroke-width="1.700"/><path d="M4.500 2v13M12.500 2v13" stroke="#fff" stroke-width="1.300"/></svg>
<svg class="ic" style="left:343px;top:116px" viewBox="0 0 16 16"><rect width="16" height="16" fill="#000"/><path d="M1 8.500l7-5.500l7 3.500" fill="none" stroke="#10e010" stroke-width="1.700"/><path d="M8.500 2v13" stroke="#fff" stroke-width="1.800"/><rect x="2.500" y="10.500" width="2.500" height="4" fill="none" stroke="#ccc" stroke-width=".8"/></svg>
<svg class="ic" style="left:366px;top:116px" viewBox="0 0 16 16"><rect width="16" height="16" fill="#000"/><rect x="2" y="2.500" width="2" height="2" fill="#10e010"/><rect x="2" y="6.500" width="2" height="2" fill="#10e0f0"/><path d="M6 3.500h8M6 7.500h8" stroke="#bbb" stroke-width="2" stroke-dasharray="3 1"/></svg>
<svg class="ic" style="left:389px;top:116px" viewBox="0 0 16 16"><g transform="rotate(-45 8 8)"><rect x="4.500" y="-1.500" width="7" height="9" rx="1.500" fill="#f08010"/><rect x="4.500" y="5.500" width="7" height="6" fill="#888"/><rect x="4.500" y="10.500" width="7" height="2" fill="#c03010"/><rect x="4.500" y="12.500" width="7" height="4" rx="1" fill="#fff"/></g></svg>
<svg class="ic" style="left:412px;top:116px" viewBox="0 0 16 16"><rect x="0.500" y="0.500" width="15" height="15" fill="#d4d8e6" stroke="#b4b8c8"/><rect x="2.500" y="9" width="5" height="5" fill="#b0b4c4"/><path d="M7 9l7-7M14 2h-4M14 2v4" stroke="#b0b4c4" stroke-width="1.300" fill="none"/></svg>
<div class="vsep" style="left:433px;top:113px;height:22px;background:#9a9eac"></div>
<svg class="ic" style="left:440px;top:116px" viewBox="0 0 16 16"><rect x="0.500" y="0.500" width="15" height="8.500" rx="1.500" fill="#f4f060" stroke="#a09820"/><path d="M6 9l5 5" stroke="#000" stroke-width="1.500"/><path d="M12.500 15.500h-5l5-5z" fill="#000"/><path d="M2 3.500h9M2 6h5" stroke="#887" stroke-width=".9" stroke-dasharray="1.500 .5"/></svg>
<svg class="ic" style="left:463px;top:116px" viewBox="0 0 16 16"><rect x="2.500" y="2.500" width="11" height="11" fill="#c4c8d8" stroke="#aeb2c2"/><path d="M1 1l14 14M15 1l-14 14" stroke="#a8acbc" stroke-width="1.600"/></svg>
<div class="vsep" style="left:485px;top:113px;height:22px;background:#9a9eac"></div>
<svg class="ic" style="left:494px;top:116px" viewBox="0 0 16 16"><path d="M1 8c3-4.500 11-4.500 14 0c-3 4.500-11 4.500-14 0z" fill="#d8dcea" stroke="#aeb2c2"/><circle cx="8" cy="8" r="2.500" fill="#aeb2c2"/><path d="M2 14l12-12M1 5l13 8" stroke="#b4b8c8" stroke-width="1"/></svg>
<div class="t" style="left:1516px;top:115px;font-family:'Liberation Serif',serif;font-weight:bold;font-size:18px;line-height:18px;color:#000">1</div>
<svg class="ic" style="left:1529px;top:116px" viewBox="0 0 16 16"><path d="M2.500 2.500l11 11M13.500 2.500l-11 11" stroke="#9fa3b0" stroke-width="4"/><path d="M2.500 2.500l11 11M13.500 2.500l-11 11" stroke="#c6cad8" stroke-width="2.400"/></svg>
<!-- ===== Meter2 floating window ===== -->
<div style="left:11px;top:315px;width:361px;height:450px;border-radius:7px;border:1px solid #6c6c6c;background:linear-gradient(90deg,#fff 0,#fff 175px,#d4efff 184px,#a8dcf4 188px,#4a5a64 194px,#1c1e20 199px,#1a1c1e 225px,#34383c 246px,#1c1e20 254px,#181a1c 100%);box-shadow:0 0 0 1px rgba(255,255,255,.25),2px 3px 7px rgba(0,0,0,.45)"></div>
<div style="left:12px;top:316px;width:359px;height:448px;border-radius:6px;border:1px solid rgba(255,255,255,.55)"></div>
<div style="left:17px;top:343px;width:351px;height:415px;border:1px solid rgba(80,80,80,.55);background:#000"></div>
<svg style="position:absolute;left:19px;top:322px" width="15" height="16" viewBox="0 0 15 16"><rect x="0.500" y="0.500" width="14" height="15" rx="2" fill="#3c6a1c"/><rect x="0.500" y="2" width="14" height="11.500" fill="#8e8c14"/><text x="1" y="12" font-size="10.500" font-style="italic" font-family="Liberation Sans,sans-serif" fill="#000" textLength="13" lengthAdjust="spacingAndGlyphs">123</text></svg>
<div class="t" style="left:40.500px;top:323px;font-size:12px;line-height:15px;text-shadow:0 0 5px #fff,0 0 8px #fff">Meter2</div>
<div style="left:262px;top:315px;width:105px;height:21px;border:1px solid #a0a4a8;border-top:0;border-radius:0 0 5px 5px;background:linear-gradient(rgba(110,114,120,.5),rgba(40,44,50,.5) 50%,rgba(8,8,10,.6) 52%,rgba(50,54,60,.5));box-shadow:inset 0 0 0 1px rgba(0,0,0,.6)"></div>
<div style="left:292px;top:317px;width:1px;height:18px;background:#a0a4a8;opacity:.75"></div>
<div style="left:318px;top:317px;width:1px;height:18px;background:#a0a4a8;opacity:.75"></div>
<div style="left:271.500px;top:325px;width:12px;height:4px;background:#fff;border:1px solid #444;border-radius:1px"></div>
<div style="left:299px;top:319.500px;width:11px;height:9px;border:2px solid #fff;border-top-width:3px;box-shadow:0 0 0 1px #444,inset 0 0 0 1px #444"></div>
<div class="t" style="left:337px;top:315.500px;font-size:14px;font-weight:bold;color:#fff;line-height:16px;text-shadow:0 0 2px #333,0 0 1px #000;transform:scaleX(1.200);transform-origin:0 0">x</div>
<div style="left:21px;top:347px;width:169px;height:24px;background:#fff;border-radius:5px"></div>
<svg style="position:absolute;left:24.5px;top:351.5px" width="15" height="15" viewBox="0 0 15 15"><circle cx="7.500" cy="7.500" r="7" fill="#b4b4b4" stroke="#7a7a7a"/><circle cx="7.500" cy="7.500" r="5.300" fill="none" stroke="#8a8a8a" stroke-width=".8"/><circle cx="7.500" cy="7.500" r="4.600" fill="#28e000"/><circle cx="7.500" cy="7.500" r="2.200" fill="#f4e420"/><circle cx="7.500" cy="7.500" r=".7" fill="#604000"/></svg>
<div class="t" style="left:44.5px;top:352px;font-size:12px;line-height:14px">Kan1</div>
<div style="left:194px;top:347px;width:169px;height:24px;background:#fff;border-radius:5px"></div>
<svg style="position:absolute;left:197.5px;top:351.5px" width="15" height="15" viewBox="0 0 15 15"><circle cx="7.500" cy="7.500" r="7" fill="#b4b4b4" stroke="#7a7a7a"/><circle cx="7.500" cy="7.500" r="5.300" fill="none" stroke="#8a8a8a" stroke-width=".8"/><circle cx="7.500" cy="7.500" r="4.600" fill="#20e8e8"/><circle cx="7.500" cy="7.500" r="2.200" fill="#f4e420"/><circle cx="7.500" cy="7.500" r=".7" fill="#604000"/></svg>
<div class="t" style="left:217.5px;top:352px;font-size:12px;line-height:14px">Kan2</div>
<div class="cell g" style="left:21px;top:375px"><b style="letter-spacing:-.5px">Maximum</b><span class="seg ghost gh5"></span><span class="seg"><u></u><u></u><u>7</u><i>.</i><u>2</u><u>0</u></span><span class="unit" style="left:98.5px;top:29px">V</span></div>
<div class="cell c" style="left:194px;top:375px"><b style="letter-spacing:-.5px">Maximum</b><span class="seg ghost gh5"></span><span class="seg"><u></u><u>3</u><i>.</i><u>0</u><u>3</u><u>9</u></span><span class="unit" style="left:98.5px;top:29px">V</span></div>
<div class="cell g" style="left:21px;top:430px"><b style="letter-spacing:-.5px">Minimum</b><span class="seg ghost gh5"></span><span class="seg"><u></u><u class="m">-</u><u>7</u><i>.</i><u>0</u><u>4</u></span><span class="unit" style="left:98.5px;top:29px">V</span></div>
<div class="cell c" style="left:194px;top:430px"><b style="letter-spacing:-.5px">Minimum</b><span class="seg ghost gh5"></span><span class="seg"><u class="m">-</u><u>2</u><i>.</i><u>9</u><u>8</u><u>1</u></span><span class="unit" style="left:98.5px;top:29px">V</span></div>
<div class="cell g" style="left:21px;top:485px"><b>Spitze-Spitze</b><span class="seg ghost gh5"></span><span class="seg"><u></u><u>1</u><u>4</u><i>.</i><u>2</u><u>4</u></span><span class="unit" style="left:98.5px;top:29px">V</span></div>
<div class="cell c" style="left:194px;top:485px"><b>Spitze-Spitze</b><span class="seg ghost gh5"></span><span class="seg"><u></u><u></u><u>6</u><i>.</i><u>0</u><u>2</u></span><span class="unit" style="left:98.5px;top:29px">V</span></div>
<div class="cell g" style="left:21px;top:540px"><b>Echteffektiv</b><span class="seg ghost gh5"></span><span class="seg"><u></u><u></u><u>5</u><i>.</i><u>0</u><u>0</u></span><span class="unit" style="left:98.5px;top:29px">V</span></div>
<div class="cell c" style="left:194px;top:540px"><b>Echteffektiv</b><span class="seg ghost gh5"></span><span class="seg"><u></u><u>2</u><i>.</i><u>0</u><u>4</u><u>1</u></span><span class="unit" style="left:98.5px;top:29px">V</span></div>
<div class="cell g" style="left:21px;top:595px"><b>Mittelwert</b><span class="seg ghost gh5"></span><span class="seg"><u></u><u></u><u>0</u><i>.</i><u>0</u><u>4</u></span><span class="unit" style="left:98.5px;top:29px">V</span></div>
<div class="cell c" style="left:194px;top:595px"><b>Mittelwert</b><span class="seg ghost gh5"></span><span class="seg"><u></u><u>0</u><i>.</i><u>0</u><u>5</u><u>3</u></span><span class="unit" style="left:98.5px;top:29px">V</span></div>
<div class="cell g" style="left:21px;top:650px"><b>Frequenz</b><span class="seg ghost gh7"></span><span class="seg"><u></u><u></u><u></u><u>9</u><i>.</i><u>5</u><u>9</u><u>7</u></span><span class="unit" style="left:135.4px;top:29px">kHz</span></div>
<div class="cell c" style="left:194px;top:650px"><b>Frequenz</b><span class="seg ghost gh7"></span><span class="seg"><u></u><u></u><u></u><u>9</u><i>.</i><u>5</u><u>9</u><u>7</u></span><span class="unit" style="left:135.4px;top:29px">kHz</span></div>
<div class="cell g" style="left:21px;top:705px"><b>Period count</b><span class="seg ghost gh7"></span><span class="seg"><u></u><u></u><u></u><u>4</u><i>.</i><u>0</u><u>0</u><u>0</u></span></div>
<div class="cell c" style="left:194px;top:705px"><b>Period count</b><span class="seg ghost gh7"></span><span class="seg"><u></u><u></u><u></u><u>4</u><i>.</i><u>0</u><u>0</u><u>0</u></span></div>
</div></body></html>
